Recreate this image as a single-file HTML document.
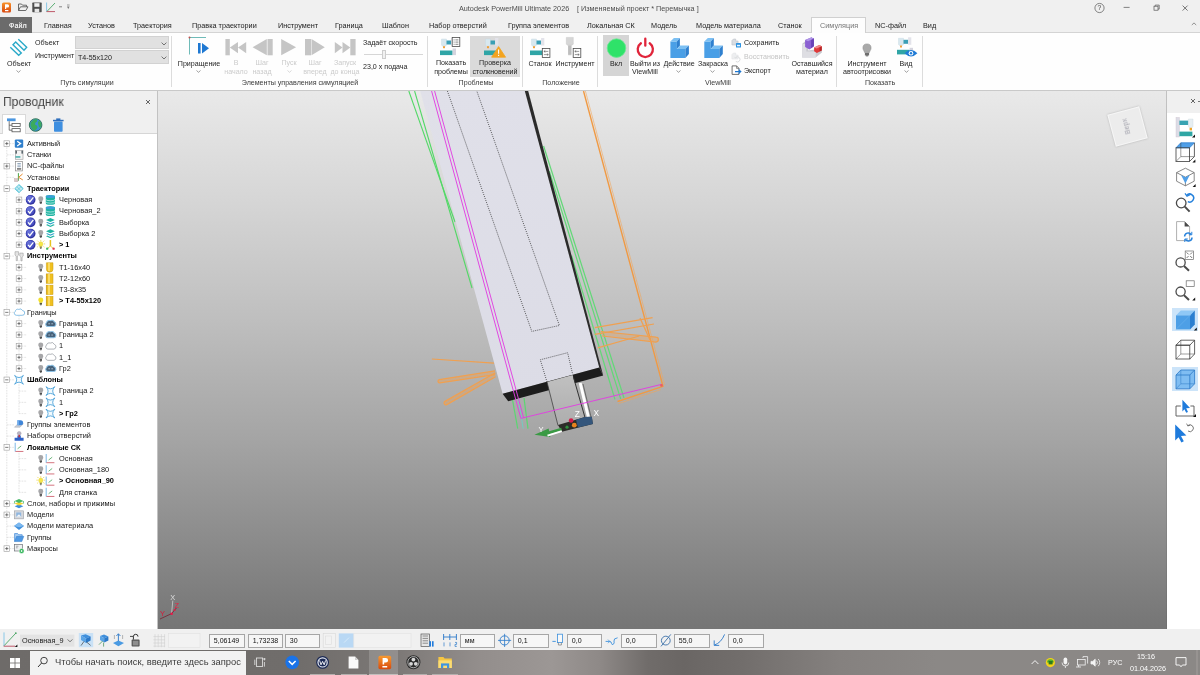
<!DOCTYPE html>
<html lang="ru">
<head>
<meta charset="utf-8">
<title>Autodesk PowerMill Ultimate 2026</title>
<style>
*{box-sizing:border-box;margin:0;padding:0}
html,body{width:1200px;height:675px;overflow:hidden;background:#f0f0f0}
body{font-family:"Liberation Sans",sans-serif;font-size:7.5px;color:#1e1e1e;position:relative}
.abs{position:absolute}
.t{position:absolute;white-space:nowrap;line-height:1;will-change:transform}
svg{position:absolute;overflow:visible;will-change:transform}
/* title */
#title{left:0;top:0;width:1200px;height:17px;background:#f0f0f0}
#tabs{left:0;top:17px;width:1200px;height:16px;background:#f0f0f0;border-bottom:1px solid #d4d4d4}
#tabs .t{top:5.2px;font-size:7.28px;color:#222}
#ribbon{left:0;top:33px;width:1200px;height:57px;background:#fefefe}
#ribbon .sep{position:absolute;top:3px;width:1px;height:51px;background:#dcdcdc}
#ribbon .gl{position:absolute;top:46px;font-size:7.3px;color:#333;white-space:nowrap;line-height:1;transform:translateX(-50%)}
#ribbon .bl{position:absolute;font-size:7.3px;color:#222;white-space:nowrap;line-height:8.2px;text-align:center;transform:translateX(-50%)}
#ribbon .dis{color:#b9b9b9}
#ribbon .t{margin-top:1.3px}
#ribline{left:0;top:90px;width:1200px;height:1px;background:#c9c9c9}
/* explorer */
#exphead{left:0;top:91px;width:157px;height:43px;background:#f0f0f0;border-bottom:1px solid #d6d6d6}
#tree{left:0;top:134px;width:157px;height:495px;background:#fff}
#expborder{left:157px;top:91px;width:1px;height:538px;background:#c2c2c2}
#tree .r{will-change:transform;position:absolute;left:0;height:11.25px;white-space:nowrap;font-size:7.4px;line-height:11.25px;color:#151515}
#tree .b{font-weight:bold;color:#000}
/* viewport */
#view{left:158px;top:91px;width:1009px;height:538px;background:linear-gradient(#e9e9e9 0%,#d6d6d6 20%,#bebebe 43%,#a4a4a4 65%,#757575 100%);overflow:hidden}
#rtool{left:1167px;top:91px;width:33px;height:538px;background:#fff}
#rthead{left:1167px;top:91px;width:33px;height:22px;background:#f0f0f0}
#status{left:0;top:629px;width:1200px;height:21px;background:#f0f0f0}
#status .box{will-change:transform;position:absolute;top:4.6px;height:14.2px;background:#f6f6f6;border:1px solid #a6a6a6;font-size:7.05px;line-height:12px;padding-left:3.8px;color:#111;white-space:nowrap}
#task{left:0;top:650px;width:1200px;height:25px;background:linear-gradient(90deg,#6e6b69 0%,#706d6b 25%,#7c7876 33%,#938e8c 40%,#9c9795 46%,#8e8987 50%,#706c6a 54%,#6a6664 57%,#726e6c 62%,#85817f 70%,#8b8886 78%,#8b8886 100%)}
</style>
</head>
<body>
<div id="title" class="abs">
<svg style="left:0;top:0" width="80" height="17" viewBox="0 0 80 17">
 <defs><linearGradient id="og" x1="0" y1="0" x2="0" y2="1"><stop offset="0" stop-color="#f7922a"/><stop offset="1" stop-color="#d8480e"/></linearGradient></defs>
 <rect x="2" y="2.5" width="9" height="10" rx="1.6" fill="url(#og)"/>
 <path d="M5 4.2h2.4a1.7 1.7 0 0 1 0 3.4H6.2V9H5z" fill="#fff"/><rect x="5" y="10" width="3.4" height="1.2" fill="#fff"/>
 <path d="M18.5 10.5V4h3l1 1.2h4v1.6M18.5 10.5l2-3.7h7.5l-2.2 3.7z" fill="none" stroke="#5a5a5a" stroke-width="0.9"/>
 <rect x="32.3" y="2.6" width="9.4" height="9.6" rx="0.6" fill="#4d4d4d"/><rect x="34.3" y="3.2" width="5.2" height="3.6" fill="#f0f0f0"/><rect x="34.6" y="8.8" width="4.6" height="3.4" fill="#e8e8e8"/>
 <path d="M46.6 2.5v9" stroke="#7ec3e6" stroke-width="0.9"/><path d="M47 11.4L55 3" stroke="#4aa564" stroke-width="0.9"/><path d="M46.6 11.6H55" stroke="#b9485a" stroke-width="0.9"/>
 <path d="M59 6.8h3" stroke="#777" stroke-width="0.9"/>
 <path d="M67 6.5h2.6l-1.3 2.6z" fill="#777"/><path d="M67 5h2.6" stroke="#777" stroke-width="0.7"/>
</svg>
<span class="t" style="left:458.6px;top:4.9px;font-size:7.24px;color:#4c4c4c">Autodesk PowerMill Ultimate 2026</span>
<span class="t" style="left:576.6px;top:4.9px;font-size:7.24px;color:#4c4c4c">[ Изменяемый проект * Перемычка ]</span>
<svg style="left:1090px;top:0" width="110" height="17" viewBox="0 0 110 17">
 <circle cx="9.5" cy="8" r="4.6" fill="none" stroke="#555" stroke-width="0.7"/>
 <text x="9.5" y="10.4" font-size="6.8" text-anchor="middle" fill="#444" font-family="Liberation Sans, sans-serif">?</text>
 <path d="M33.6 7.4h6" stroke="#666" stroke-width="0.8"/>
 <rect x="64" y="6.2" width="4" height="4" fill="none" stroke="#555" stroke-width="0.7"/><path d="M65.2 6.2v-1.1h4v4h-1.2" fill="none" stroke="#555" stroke-width="0.7"/>
 <path d="M92.6 5.6l5 5m0-5l-5 5" stroke="#555" stroke-width="0.8"/>
</svg>
</div>
<div id="tabs" class="abs">
<div class="abs" style="left:0;top:0;width:32px;height:16px;background:#6b6b6b"></div>
<span class="t" style="left:8.6px;color:#ececec;font-size:7.2px;top:5.3px;text-shadow:0 0 0.3px #ececec">Файл</span>
<div class="abs" style="left:810.5px;top:0;width:55px;height:17px;background:#fdfdfd;border:1px solid #d0d0d0;border-bottom:none"></div>
<span class="t" style="left:44px">Главная</span>
<span class="t" style="left:88px">Установ</span>
<span class="t" style="left:133px">Траектория</span>
<span class="t" style="left:192px">Правка траектории</span>
<span class="t" style="left:278px">Инструмент</span>
<span class="t" style="left:335px">Граница</span>
<span class="t" style="left:382px">Шаблон</span>
<span class="t" style="left:429px">Набор отверстий</span>
<span class="t" style="left:507.6px">Группа элементов</span>
<span class="t" style="left:586.6px">Локальная СК</span>
<span class="t" style="left:651.2px">Модель</span>
<span class="t" style="left:696px">Модель материала</span>
<span class="t" style="left:778px">Станок</span>
<span class="t" style="left:820px;color:#777">Симуляция</span>
<span class="t" style="left:875px">NC-файл</span>
<span class="t" style="left:923px">Вид</span>
<svg style="left:1191px;top:5px" width="6" height="4" viewBox="0 0 6 4"><path d="M0.8 3L3 0.9L5.2 3" fill="none" stroke="#777" stroke-width="0.8"/></svg>
</div>
<div id="ribbon" class="abs">
<div class="sep" style="left:171.0px"></div>
<div class="sep" style="left:427.0px"></div>
<div class="sep" style="left:522.0px"></div>
<div class="sep" style="left:597.0px"></div>
<div class="sep" style="left:836.0px"></div>
<div class="sep" style="left:921.5px"></div>
<span class="t " style="left:86.5px;top:45.88px;font-size:7.1px;color:#3a3a3a;transform:translateX(-50%);">Путь симуляции</span>
<span class="t " style="left:299.5px;top:45.88px;font-size:7.1px;color:#3a3a3a;transform:translateX(-50%);">Элементы управления симуляцией</span>
<span class="t " style="left:475.5px;top:45.88px;font-size:7.1px;color:#3a3a3a;transform:translateX(-50%);">Проблемы</span>
<span class="t " style="left:560.5px;top:45.88px;font-size:7.1px;color:#3a3a3a;transform:translateX(-50%);">Положение</span>
<span class="t " style="left:717.5px;top:45.88px;font-size:7.1px;color:#3a3a3a;transform:translateX(-50%);">ViewMill</span>
<span class="t " style="left:879.5px;top:45.88px;font-size:7.1px;color:#3a3a3a;transform:translateX(-50%);">Показать</span>
<svg style="left:8px;top:3px" width="22" height="22" viewBox="0 0 22 22">
<path d="M2.3 11.3L10.7 19.3L13.3 17L5 8.7L7.7 6L16 14.3L18.7 11.3L10.3 3.3" fill="none" stroke="#2aa9c8" stroke-width="1.4" stroke-linejoin="miter"/>
</svg>
<span class="t " style="left:18.8px;top:26.78px;font-size:7.1px;transform:translateX(-50%);">Объект</span>
<svg style="left:16px;top:37px" width="5" height="3" viewBox="0 0 5 3"><path d="M0.5 0.5L2.5 2.3L4.5 0.5" fill="none" stroke="#777" stroke-width="0.7"/></svg>
<span class="t " style="left:35px;top:5.97px;font-size:7.1px;">Объект</span>
<span class="t " style="left:35px;top:18.78px;font-size:7.1px;">Инструмент</span>
<div class="abs" style="left:75.3px;top:2.6px;width:93.7px;height:13.2px;background:#e1e1e1;border:1px solid #d2d2d2"></div>
<div class="abs" style="left:75.3px;top:17.2px;width:93.7px;height:13.4px;background:#e1e1e1;border:1px solid #d2d2d2"></div>
<span class="t " style="left:77.6px;top:20.38px;font-size:7.1px;color:#222;">T4-55x120</span>
<svg style="left:160.5px;top:8.5px" width="6" height="4" viewBox="0 0 6 4"><path d="M0.6 0.6L3 3L5.4 0.6" fill="none" stroke="#555" stroke-width="0.8"/></svg>
<svg style="left:160.5px;top:22.5px" width="6" height="4" viewBox="0 0 6 4"><path d="M0.6 0.6L3 3L5.4 0.6" fill="none" stroke="#555" stroke-width="0.8"/></svg>
<svg style="left:186px;top:2.3px" width="24" height="22" viewBox="0 0 24 22">
<path d="M3.5 19.5V2.5H20" fill="none" stroke="#4aa9a6" stroke-width="0.8"/>
<circle cx="3.5" cy="2.5" r="1" fill="#c0504d"/>
<rect x="12" y="8" width="2.6" height="10.5" fill="#1e78d2"/>
<path d="M16 8L23 13.2L16 18.5z" fill="#1e78d2"/>
</svg>
<span class="t " style="left:198.5px;top:26.68px;font-size:7.1px;transform:translateX(-50%);">Приращение</span>
<svg style="left:196.0px;top:36.8px" width="5" height="3" viewBox="0 0 5 3"><path d="M0.5 0.5L2.5 2.3L4.5 0.5" fill="none" stroke="#777" stroke-width="0.7"/></svg>
<svg style="left:224px;top:5px" width="136" height="19" viewBox="0 0 136 19">
<g fill="#c5c5c5">
<rect x="1.4" y="1" width="4.4" height="16.3"/><path d="M14 4L5.8 9.6L14 15.2z"/><path d="M22.2 4L14 9.6L22.2 15.2z"/>
<path d="M42.8 1L28.6 9.15L42.8 17.3z"/><rect x="43.5" y="1" width="5.2" height="16.3"/>
<path d="M57.2 1L72.1 9.15L57.2 17.3z"/>
<rect x="81" y="1" width="6" height="16.3"/><path d="M87.5 1L100.8 9.15L87.5 17.3z"/>
<path d="M110.8 4L118.5 9.6L110.8 15.2z"/><path d="M118.5 4L126.3 9.6L118.5 15.2z"/><rect x="126.3" y="1" width="5.3" height="16.3"/>
</g></svg>
<span class="t " style="left:236px;top:25.88px;font-size:7.1px;color:#cbcbcb;transform:translateX(-50%);">В</span>
<span class="t " style="left:236px;top:34.38px;font-size:7.1px;color:#cbcbcb;transform:translateX(-50%);">начало</span>
<span class="t " style="left:262px;top:25.88px;font-size:7.1px;color:#cbcbcb;transform:translateX(-50%);">Шаг</span>
<span class="t " style="left:262px;top:34.38px;font-size:7.1px;color:#cbcbcb;transform:translateX(-50%);">назад</span>
<span class="t " style="left:289px;top:25.88px;font-size:7.1px;color:#cbcbcb;transform:translateX(-50%);">Пуск</span>
<svg style="left:286.5px;top:36.8px" width="5" height="3" viewBox="0 0 5 3"><path d="M0.5 0.5L2.5 2.3L4.5 0.5" fill="none" stroke="#c8c8c8" stroke-width="0.7"/></svg>
<span class="t " style="left:315px;top:25.88px;font-size:7.1px;color:#cbcbcb;transform:translateX(-50%);">Шаг</span>
<span class="t " style="left:315px;top:34.38px;font-size:7.1px;color:#cbcbcb;transform:translateX(-50%);">вперед</span>
<span class="t " style="left:344.5px;top:25.88px;font-size:7.1px;color:#cbcbcb;transform:translateX(-50%);">Запуск</span>
<span class="t " style="left:344.5px;top:34.38px;font-size:7.1px;color:#cbcbcb;transform:translateX(-50%);">до конца</span>
<span class="t " style="left:363px;top:5.78px;font-size:7.1px;">Задаёт скорость</span>
<div class="abs" style="left:364px;top:21.2px;width:59px;height:1px;background:#d6d6d6"></div>
<div class="abs" style="left:382.2px;top:16.8px;width:4px;height:9.4px;background:#f1f1f1;border:0.8px solid #cdcdcd"></div>
<span class="t " style="left:363px;top:30.18px;font-size:7.1px;">23,0 x подача</span>
<div class="abs" style="left:469.6px;top:3px;width:50px;height:40.6px;background:#dadada"></div>
<svg style="left:0;top:0" width="600" height="57" viewBox="0 33 600 57">
<g transform="translate(440,37.5)">
<path d="M1.5 1.5h5v6l-1 1.2h-3l-1-1.2z" fill="#d9e8ef" stroke="#c3d6e0" stroke-width="0.4"/>
<rect x="3" y="8.7" width="2" height="2" fill="#f0a13a"/>
<rect x="6.5" y="3" width="4.6" height="4" fill="#3b9fb5"/>
<rect x="11.1" y="0.5" width="3.2" height="7.5" fill="#e3e3ea"/>
<rect x="0" y="13" width="12.6" height="4.6" fill="#2fa5a6"/>
<rect x="12.6" y="11" width="3.4" height="6.6" fill="#d4d4de"/>
</g><g transform="translate(452.2,37.6)"><rect x="0" y="0" width="7.6" height="9" fill="#fff" stroke="#4a4a4a" stroke-width="0.8"/><path d="M1.4 2.3h1M3.2 2.3h3M1.4 4.5h1M3.2 4.5h3M1.4 6.7h1M3.2 6.7h3" stroke="#555" stroke-width="0.7"/></g><g transform="translate(484,37.5)">
<path d="M1.5 1.5h5v6l-1 1.2h-3l-1-1.2z" fill="#d9e8ef" stroke="#c3d6e0" stroke-width="0.4"/>
<rect x="3" y="8.7" width="2" height="2" fill="#f0a13a"/>
<rect x="6.5" y="3" width="4.6" height="4" fill="#3b9fb5"/>
<rect x="11.1" y="0.5" width="3.2" height="7.5" fill="#e3e3ea"/>
<rect x="0" y="13" width="12.6" height="4.6" fill="#2fa5a6"/>
<rect x="12.6" y="11" width="3.4" height="6.6" fill="#d4d4de"/>
</g><path d="M498.6 46.6L505.6 57.2H491.6z" fill="#f3a41f" stroke="#f3a41f" stroke-width="0.8" stroke-linejoin="round"/><path d="M498.6 49.5v4.2M498.6 54.8v1.2" stroke="#fff" stroke-width="1.1"/><g transform="translate(530,37.5)">
<path d="M1.5 1.5h5v6l-1 1.2h-3l-1-1.2z" fill="#d9e8ef" stroke="#c3d6e0" stroke-width="0.4"/>
<rect x="3" y="8.7" width="2" height="2" fill="#f0a13a"/>
<rect x="6.5" y="3" width="4.6" height="4" fill="#3b9fb5"/>
<rect x="11.1" y="0.5" width="3.2" height="7.5" fill="#e3e3ea"/>
<rect x="0" y="13" width="12.6" height="4.6" fill="#2fa5a6"/>
<rect x="12.6" y="11" width="3.4" height="6.6" fill="#d4d4de"/>
</g><g transform="translate(542.3,48.4)"><rect x="0" y="0" width="7.6" height="9" fill="#fff" stroke="#4a4a4a" stroke-width="0.8"/><path d="M1.6 3h4.4M1.6 6.2h4.4" stroke="#555" stroke-width="0.6"/><path d="M3 2l-1.4 1 1.4 1M4.6 5.2l1.4 1-1.4 1" fill="none" stroke="#555" stroke-width="0.6"/></g><g transform="translate(565.5,37)">
<path d="M0.8 0.4h7v6.8l-1.4 1h-4.2l-1.4-1z" fill="#d6d6d6" stroke="#bdbdbd" stroke-width="0.4"/>
<rect x="2.6" y="8.2" width="3.4" height="10" fill="#c4c4c4"/><path d="M2.6 10h3.4M2.6 12h3.4M2.6 14h3.4M2.6 16h3.4" stroke="#aaa" stroke-width="0.5"/>
</g><g transform="translate(573.2,48.4)"><rect x="0" y="0" width="7.6" height="9" fill="#fff" stroke="#4a4a4a" stroke-width="0.8"/><path d="M1.6 3h4.4M1.6 6.2h4.4" stroke="#555" stroke-width="0.6"/><path d="M3 2l-1.4 1 1.4 1M4.6 5.2l1.4 1-1.4 1" fill="none" stroke="#555" stroke-width="0.6"/></g></svg>
<span class="t " style="left:450.5px;top:25.88px;font-size:7.1px;transform:translateX(-50%);">Показать</span>
<span class="t " style="left:450.5px;top:34.38px;font-size:7.1px;transform:translateX(-50%);">проблемы</span>
<span class="t " style="left:494.5px;top:25.88px;font-size:7.1px;transform:translateX(-50%);">Проверка</span>
<span class="t " style="left:494.5px;top:34.38px;font-size:7.1px;transform:translateX(-50%);">столкновений</span>
<span class="t " style="left:540px;top:26.38px;font-size:7.1px;transform:translateX(-50%);">Станок</span>
<span class="t " style="left:574.5px;top:26.38px;font-size:7.1px;transform:translateX(-50%);">Инструмент</span>
<div class="abs" style="left:602.8px;top:2.4px;width:26.2px;height:41px;background:#d5d5d5"></div>
<svg style="left:600px;top:0" width="330" height="57" viewBox="600 33 330 57">
<circle cx="616.5" cy="48.1" r="9.3" fill="#2fe269" stroke="#6fe795" stroke-width="0.8"/><path d="M640.9 43.3A7.6 7.6 0 1 0 649.7 43.3" fill="none" stroke="#e0243a" stroke-width="2.3" stroke-linecap="round"/><path d="M645.3 38.7v7" stroke="#e0243a" stroke-width="2.3" stroke-linecap="round"/><g transform="translate(668.4,37.6)">
<path d="M2 4L8.5 4L8.5 11.5L17 11.5L17 20.5L2 20.5Z" fill="#4a9fe6"/>
<path d="M2 4L5.5 0.5L11.5 0.5L8.5 4Z" fill="#7cc0f3"/>
<path d="M8.5 4L11.5 0.5L11.5 8L8.5 11.5Z" fill="#2f80cf"/>
<path d="M8.5 11.5L11.5 8L20.5 8L17 11.5Z" fill="#7cc0f3"/>
<path d="M17 11.5L20.5 8L20.5 16.5L17 20.5Z" fill="#2f80cf"/>
</g><g transform="translate(702.3,37.6)">
<path d="M2 4L8.5 4L8.5 11.5L17 11.5L17 20.5L2 20.5Z" fill="#4a9fe6"/>
<path d="M2 4L5.5 0.5L11.5 0.5L8.5 4Z" fill="#7cc0f3"/>
<path d="M8.5 4L11.5 0.5L11.5 8L8.5 11.5Z" fill="#2f80cf"/>
<path d="M8.5 11.5L11.5 8L20.5 8L17 11.5Z" fill="#7cc0f3"/>
<path d="M17 11.5L20.5 8L20.5 16.5L17 20.5Z" fill="#2f80cf"/>
</g><g transform="translate(731.3,37.6)">
<path d="M0.6 3L2.2 1.4H4.4V3.4H6.8V7.4H0.6Z" fill="#d9dde2" stroke="#b4bac2" stroke-width="0.5"/>
<rect x="4.7" y="5.3" width="5" height="4.6" rx="0.5" fill="#2f94e2"/><rect x="5.7" y="7.2" width="3" height="1.5" fill="#eaf4fc"/>
</g><g transform="translate(731.3,51.6)" opacity="0.55">
<path d="M0.6 3L2.2 1.4H4.4V3.4H6.8V7.4H0.6Z" fill="#dfe1e4" stroke="#c6c9ce" stroke-width="0.5"/>
<path d="M4.5 9.8A2.6 2.6 0 1 0 4.2 6" fill="none" stroke="#b9bcc0" stroke-width="0.9"/><path d="M3 5.2l1.2 1.3 1.3-1" fill="none" stroke="#b9bcc0" stroke-width="0.8"/>
</g><g transform="translate(731.6,65.4)">
<path d="M0.5 0.5H5L7.4 3V9H0.5Z" fill="#fff" stroke="#4d4d4d" stroke-width="0.8"/><path d="M5 0.5V3H7.4" fill="none" stroke="#4d4d4d" stroke-width="0.6"/>
<path d="M3.4 6.2H8.8M7 4.2L9.2 6.2L7 8.2" fill="none" stroke="#1f78d1" stroke-width="1.1"/>
</g><g transform="translate(801.3,37)">
<path d="M0.8 7L3.6 4.6H7V13.4L13.6 12.6L20.6 9.4V15.6L14.4 20.4H0.8Z" fill="#c9c9cf"/>
<path d="M0.8 7H5V14.6H14.4V20.4H0.8Z" fill="#dedee3"/>
<path d="M3.8 3L9.8 0.4L12.6 1.6V9.2L8.2 12.4L3.8 10Z" fill="#8b60d2"/>
<path d="M9.8 0.4L12.6 1.6V9.2L9.8 11.2Z" fill="#6a42b6"/>
<path d="M3.8 3L9.8 0.4L12.6 1.6L6.8 4.2Z" fill="#b196e8"/>
<path d="M12.8 10.4L18 8L20.4 9.2V13.4L15.6 16L12.8 14.2Z" fill="#e03a3a"/>
<path d="M12.8 10.4L18 8L20.4 9.2L15.4 11.6Z" fill="#f28a8a"/>
<path d="M18.2 10.4L20.4 9.2V13.4L18.2 14.6Z" fill="#b82626"/>
</g><g transform="translate(862.6,43.6)">
<path d="M4.4 0.3a4.1 4.1 0 0 1 4.1 4.1c0 1.8-1.3 2.7-1.6 4.4H1.9C1.6 7.1 0.3 6.2 0.3 4.4A4.1 4.1 0 0 1 4.4 0.3z" fill="#a9a9a9" stroke="#8d8d8d" stroke-width="0.5"/>
<rect x="2.3" y="9.2" width="4.2" height="2.6" fill="#6e6e6e"/><rect x="3.2" y="11.8" width="2.4" height="0.9" fill="#555"/>
</g><g transform="translate(897,36.8)">
<path d="M1.5 1.5h5v6l-1 1.2h-3l-1-1.2z" fill="#d9e8ef" stroke="#c3d6e0" stroke-width="0.4"/>
<rect x="3" y="8.7" width="2" height="2" fill="#f0a13a"/>
<rect x="6.5" y="3" width="4.6" height="4" fill="#3b9fb5"/>
<rect x="11.1" y="0.5" width="3.2" height="7.5" fill="#e3e3ea"/>
<rect x="0" y="13" width="12.6" height="4.6" fill="#2fa5a6"/>
<rect x="12.6" y="11" width="3.4" height="6.6" fill="#d4d4de"/>
</g><path d="M904.6 53.2Q911 46.6 917.4 53.2Q911 59.6 904.6 53.2Z" fill="#1f7bd6"/><circle cx="911" cy="53.2" r="2.3" fill="#fff"/><circle cx="911" cy="53.2" r="1.2" fill="#1f7bd6"/></svg>
<span class="t " style="left:616.3px;top:26.38px;font-size:7.1px;transform:translateX(-50%);">Вкл</span>
<span class="t " style="left:645.3px;top:26.38px;font-size:7.1px;transform:translateX(-50%);">Выйти из</span>
<span class="t " style="left:645.3px;top:34.58px;font-size:7.1px;transform:translateX(-50%);">ViewMill</span>
<span class="t " style="left:678.7px;top:26.38px;font-size:7.1px;transform:translateX(-50%);">Действие</span>
<svg style="left:676.2px;top:37.099999999999994px" width="5" height="3" viewBox="0 0 5 3"><path d="M0.5 0.5L2.5 2.3L4.5 0.5" fill="none" stroke="#777" stroke-width="0.7"/></svg>
<span class="t " style="left:712.6px;top:26.38px;font-size:7.1px;transform:translateX(-50%);">Закраска</span>
<svg style="left:710.1px;top:37.099999999999994px" width="5" height="3" viewBox="0 0 5 3"><path d="M0.5 0.5L2.5 2.3L4.5 0.5" fill="none" stroke="#777" stroke-width="0.7"/></svg>
<span class="t " style="left:743.8px;top:5.97px;font-size:7.1px;">Сохранить</span>
<span class="t " style="left:743.8px;top:19.97px;font-size:7.1px;color:#c4c4c4;">Восстановить</span>
<span class="t " style="left:743.8px;top:33.27px;font-size:7.1px;">Экспорт</span>
<span class="t " style="left:812.3px;top:26.38px;font-size:7.1px;transform:translateX(-50%);">Оставшийся</span>
<span class="t " style="left:812.3px;top:34.58px;font-size:7.1px;transform:translateX(-50%);">материал</span>
<span class="t " style="left:867px;top:26.38px;font-size:7.1px;transform:translateX(-50%);">Инструмент</span>
<span class="t " style="left:867px;top:34.58px;font-size:7.1px;transform:translateX(-50%);">автоотрисовки</span>
<span class="t " style="left:906.4px;top:26.38px;font-size:7.1px;transform:translateX(-50%);">Вид</span>
<svg style="left:903.9px;top:37.099999999999994px" width="5" height="3" viewBox="0 0 5 3"><path d="M0.5 0.5L2.5 2.3L4.5 0.5" fill="none" stroke="#777" stroke-width="0.7"/></svg>
</div>
<div id="ribline" class="abs"></div>
<div id="exphead" class="abs">
<span class="t" style="left:2.8px;top:3.7px;font-size:13px;color:#444;transform:scaleX(0.93);transform-origin:0 0">Проводник</span>
<svg style="left:144.6px;top:7.5px" width="6" height="6" viewBox="0 0 6 6"><path d="M1 1L5 5M5 1L1 5" stroke="#555" stroke-width="0.9"/></svg>
<div class="abs" style="left:1.6px;top:22.6px;width:24.6px;height:20.4px;background:#fff;border:1px solid #d9d9d9;border-bottom:none"></div>
<svg style="left:0;top:22px" width="70" height="22" viewBox="0 113 70 22">
<rect x="7" y="118.4" width="8.6" height="2.8" fill="#4a96e0"/>
<path d="M9.2 121.2V130.2H12M9.2 125.2H12" fill="none" stroke="#555" stroke-width="0.8"/>
<rect x="12" y="123.4" width="8.2" height="3.2" fill="#fff" stroke="#555" stroke-width="0.8"/>
<rect x="12" y="128.6" width="8.2" height="3.2" fill="#fff" stroke="#555" stroke-width="0.8"/>
<circle cx="35.6" cy="125" r="6.3" fill="#3a8fd6" stroke="#2c6f4a" stroke-width="0.9"/>
<path d="M31 122.2q2-3 5.4-3.2q1.6 1.4 0.4 2.8q-2 0.6-1.8 2.6q2.4 0.4 2.6 2.8q-1.2 2.6-3 3.6q-3.4-1.6-4.2-5q-0.2-2 0.6-3.6z" fill="#3bab5e"/>
<path d="M38.6 121q1.8 0 2.6 2.2q0.4 2.6-1 4.6q-1.6-0.8-1.8-2.8q-1.2-2.2 0.2-4z" fill="#3bab5e"/>
<rect x="54" y="121.6" width="8.6" height="10.2" rx="0.8" fill="#3f8fe0"/>
<rect x="53" y="119.8" width="10.6" height="1.5" fill="#2f6fbd"/><rect x="56.2" y="118.4" width="4.2" height="1.6" fill="#2f6fbd"/>
</svg>
</div>
<div id="tree" class="abs">
<svg style="left:0;top:0" width="157" height="495" viewBox="0 134 157 495">
<path d="M6.8 143.6V548.6" stroke="#c4c4c4" stroke-width="0.7" stroke-dasharray="0.7 0.9"/>
<path d="M19 192.6V244.85" stroke="#c4c4c4" stroke-width="0.7" stroke-dasharray="0.7 0.9"/>
<path d="M19 260.1V301.1" stroke="#c4c4c4" stroke-width="0.7" stroke-dasharray="0.7 0.9"/>
<path d="M19 316.35V368.6" stroke="#c4c4c4" stroke-width="0.7" stroke-dasharray="0.7 0.9"/>
<path d="M19 383.85V413.6" stroke="#c4c4c4" stroke-width="0.7" stroke-dasharray="0.7 0.9"/>
<path d="M19 451.35V492.35" stroke="#c4c4c4" stroke-width="0.7" stroke-dasharray="0.7 0.9"/>
<path d="M7 143.6H14" stroke="#c4c4c4" stroke-width="0.7" stroke-dasharray="0.7 0.9"/><rect x="4.00" y="140.80" width="5.6" height="5.6" fill="#fff" stroke="#9c9c9c" stroke-width="0.6"/><path d="M5.20 143.60h3.2" stroke="#444" stroke-width="0.7"/><path d="M6.80 142.00v3.2" stroke="#444" stroke-width="0.7"/><g transform="translate(19.00,143.60) scale(1)"><rect x="-4.2" y="-4.2" width="8.4" height="8.4" rx="1.2" fill="#2f7fcc"/><path d="M-1.8 -2.4L1.6 0L-1.8 2.4" fill="none" stroke="#fff" stroke-width="1.3"/></g>
<path d="M7 154.85H14" stroke="#c4c4c4" stroke-width="0.7" stroke-dasharray="0.7 0.9"/><g transform="translate(19.00,154.85) scale(1)"><rect x="-3.6" y="-4.2" width="7.6" height="8.6" fill="#f4f4f4" stroke="#9a9a9a" stroke-width="0.6"/><rect x="-3.6" y="-4.2" width="1.6" height="3" fill="#5e6a70"/><rect x="2.4" y="-4.2" width="1.6" height="3" fill="#5e6a70"/><rect x="-3.6" y="1.4" width="5" height="1.4" fill="#39a7a5"/></g>
<path d="M7 166.1H14" stroke="#c4c4c4" stroke-width="0.7" stroke-dasharray="0.7 0.9"/><rect x="4.00" y="163.30" width="5.6" height="5.6" fill="#fff" stroke="#9c9c9c" stroke-width="0.6"/><path d="M5.20 166.10h3.2" stroke="#444" stroke-width="0.7"/><path d="M6.80 164.50v3.2" stroke="#444" stroke-width="0.7"/><g transform="translate(19.00,166.10) scale(1)"><rect x="-3.4" y="-4.6" width="7" height="9.4" fill="#fff" stroke="#8a8a8a" stroke-width="0.7"/><path d="M-1.6 -2.6h3.4M-1.6 -1h3.4M-1.6 0.6h3.4" stroke="#6a87a5" stroke-width="0.7"/><rect x="-2" y="2" width="4.2" height="1.6" fill="#777"/></g>
<path d="M7 177.35H14" stroke="#c4c4c4" stroke-width="0.7" stroke-dasharray="0.7 0.9"/><g transform="translate(19.00,177.35) scale(1)"><path d="M-0.6 -4.2V3.4" stroke="#4aa64a" stroke-width="1"/><path d="M-0.4 0L3.6 -3.4M-0.4 0L3.8 2.6" stroke="#e58a2d" stroke-width="1"/><rect x="-4.6" y="1.2" width="3.6" height="3.2" fill="#d9c9c9" stroke="#b9a9a9" stroke-width="0.4"/></g>
<path d="M7 188.6H14" stroke="#c4c4c4" stroke-width="0.7" stroke-dasharray="0.7 0.9"/><rect x="4.00" y="185.80" width="5.6" height="5.6" fill="#fff" stroke="#9c9c9c" stroke-width="0.6"/><path d="M5.20 188.60h3.2" stroke="#444" stroke-width="0.7"/><g transform="translate(19.00,188.60) scale(0.88)"><path d="M0 -4.6L4.8 0L0 4.6L-4.8 0Z" fill="#bfeaf2" stroke="#3bb8d0" stroke-width="0.8"/><path d="M-2.4 -2.2L2.2 2.4M0 -4.4L4.4 0M-4.4 0L0 4.4M-2.2 2.2L2.2 -2.2" stroke="#3bb8d0" stroke-width="0.6"/></g>
<path d="M19 199.85H25" stroke="#c4c4c4" stroke-width="0.7" stroke-dasharray="0.7 0.9"/><rect x="16.20" y="197.05" width="5.6" height="5.6" fill="#fff" stroke="#9c9c9c" stroke-width="0.6"/><path d="M17.40 199.85h3.2" stroke="#444" stroke-width="0.7"/><path d="M19.00 198.25v3.2" stroke="#444" stroke-width="0.7"/><g transform="translate(30.60,199.85) scale(0.98)"><circle r="5" fill="#31339f"/><circle r="4.2" cx="-0.4" cy="-0.5" fill="#4a52c4"/><circle r="2.6" cx="-1.2" cy="-1.6" fill="#6d79dc" opacity="0.7"/><path d="M-2.6 0L-0.8 2.2L2.8 -2.6" fill="none" stroke="#fff" stroke-width="1.3"/></g><g transform="translate(40.80,200.05) scale(0.86)"><path d="M0 -4.4a2.9 2.9 0 0 1 2.9 2.9c0 1.3-1 1.9-1.2 3.1H-1.7C-1.9 0.4-2.9 -0.2-2.9 -1.5A2.9 2.9 0 0 1 0 -4.4z" fill="#a6a6a8"/><rect x="-1.4" y="1.8" width="2.8" height="2" fill="#4e4e4e"/><rect x="-0.8" y="3.8" width="1.6" height="0.8" fill="#3a3a3a"/></g><g transform="translate(50.40,199.85) scale(1)"><path d="M-4.6 -3.4a4.6 1.5 0 0 1 9.2 0V3.4a4.6 1.5 0 0 1-9.2 0Z" fill="#1fb4a2"/><ellipse cx="0" cy="-3.4" rx="4.6" ry="1.5" fill="#3aa0d8"/><path d="M-4.6 -0.6a4.6 1.5 0 0 0 9.2 0M-4.6 1.8a4.6 1.5 0 0 0 9.2 0" fill="none" stroke="#d8f4f0" stroke-width="0.7"/></g>
<path d="M19 211.1H25" stroke="#c4c4c4" stroke-width="0.7" stroke-dasharray="0.7 0.9"/><rect x="16.20" y="208.30" width="5.6" height="5.6" fill="#fff" stroke="#9c9c9c" stroke-width="0.6"/><path d="M17.40 211.10h3.2" stroke="#444" stroke-width="0.7"/><path d="M19.00 209.50v3.2" stroke="#444" stroke-width="0.7"/><g transform="translate(30.60,211.10) scale(0.98)"><circle r="5" fill="#31339f"/><circle r="4.2" cx="-0.4" cy="-0.5" fill="#4a52c4"/><circle r="2.6" cx="-1.2" cy="-1.6" fill="#6d79dc" opacity="0.7"/><path d="M-2.6 0L-0.8 2.2L2.8 -2.6" fill="none" stroke="#fff" stroke-width="1.3"/></g><g transform="translate(40.80,211.30) scale(0.86)"><path d="M0 -4.4a2.9 2.9 0 0 1 2.9 2.9c0 1.3-1 1.9-1.2 3.1H-1.7C-1.9 0.4-2.9 -0.2-2.9 -1.5A2.9 2.9 0 0 1 0 -4.4z" fill="#a6a6a8"/><rect x="-1.4" y="1.8" width="2.8" height="2" fill="#4e4e4e"/><rect x="-0.8" y="3.8" width="1.6" height="0.8" fill="#3a3a3a"/></g><g transform="translate(50.40,211.10) scale(1)"><path d="M-4.6 -3.4a4.6 1.5 0 0 1 9.2 0V3.4a4.6 1.5 0 0 1-9.2 0Z" fill="#1fb4a2"/><ellipse cx="0" cy="-3.4" rx="4.6" ry="1.5" fill="#3aa0d8"/><path d="M-4.6 -0.6a4.6 1.5 0 0 0 9.2 0M-4.6 1.8a4.6 1.5 0 0 0 9.2 0" fill="none" stroke="#d8f4f0" stroke-width="0.7"/></g>
<path d="M19 222.35H25" stroke="#c4c4c4" stroke-width="0.7" stroke-dasharray="0.7 0.9"/><rect x="16.20" y="219.55" width="5.6" height="5.6" fill="#fff" stroke="#9c9c9c" stroke-width="0.6"/><path d="M17.40 222.35h3.2" stroke="#444" stroke-width="0.7"/><path d="M19.00 220.75v3.2" stroke="#444" stroke-width="0.7"/><g transform="translate(30.60,222.35) scale(0.98)"><circle r="5" fill="#31339f"/><circle r="4.2" cx="-0.4" cy="-0.5" fill="#4a52c4"/><circle r="2.6" cx="-1.2" cy="-1.6" fill="#6d79dc" opacity="0.7"/><path d="M-2.6 0L-0.8 2.2L2.8 -2.6" fill="none" stroke="#fff" stroke-width="1.3"/></g><g transform="translate(40.80,222.55) scale(0.86)"><path d="M0 -4.4a2.9 2.9 0 0 1 2.9 2.9c0 1.3-1 1.9-1.2 3.1H-1.7C-1.9 0.4-2.9 -0.2-2.9 -1.5A2.9 2.9 0 0 1 0 -4.4z" fill="#a6a6a8"/><rect x="-1.4" y="1.8" width="2.8" height="2" fill="#4e4e4e"/><rect x="-0.8" y="3.8" width="1.6" height="0.8" fill="#3a3a3a"/></g><g transform="translate(50.40,222.35) scale(1)"><path d="M-4.4 -2.4L0 -4.4L4.4 -2.4L0 -0.4Z" fill="#1fb4a2"/><path d="M-4.4 0.2L0 2.2L4.4 0.2L3 -0.4L0 1L-3 -0.4Z" fill="#2a9fc8"/><path d="M-4.4 2.6L0 4.6L4.4 2.6L3 2L0 3.4L-3 2Z" fill="#1fb4a2"/></g>
<path d="M19 233.6H25" stroke="#c4c4c4" stroke-width="0.7" stroke-dasharray="0.7 0.9"/><rect x="16.20" y="230.80" width="5.6" height="5.6" fill="#fff" stroke="#9c9c9c" stroke-width="0.6"/><path d="M17.40 233.60h3.2" stroke="#444" stroke-width="0.7"/><path d="M19.00 232.00v3.2" stroke="#444" stroke-width="0.7"/><g transform="translate(30.60,233.60) scale(0.98)"><circle r="5" fill="#31339f"/><circle r="4.2" cx="-0.4" cy="-0.5" fill="#4a52c4"/><circle r="2.6" cx="-1.2" cy="-1.6" fill="#6d79dc" opacity="0.7"/><path d="M-2.6 0L-0.8 2.2L2.8 -2.6" fill="none" stroke="#fff" stroke-width="1.3"/></g><g transform="translate(40.80,233.80) scale(0.86)"><path d="M0 -4.4a2.9 2.9 0 0 1 2.9 2.9c0 1.3-1 1.9-1.2 3.1H-1.7C-1.9 0.4-2.9 -0.2-2.9 -1.5A2.9 2.9 0 0 1 0 -4.4z" fill="#a6a6a8"/><rect x="-1.4" y="1.8" width="2.8" height="2" fill="#4e4e4e"/><rect x="-0.8" y="3.8" width="1.6" height="0.8" fill="#3a3a3a"/></g><g transform="translate(50.40,233.60) scale(1)"><path d="M-4.4 -2.4L0 -4.4L4.4 -2.4L0 -0.4Z" fill="#1fb4a2"/><path d="M-4.4 0.2L0 2.2L4.4 0.2L3 -0.4L0 1L-3 -0.4Z" fill="#2a9fc8"/><path d="M-4.4 2.6L0 4.6L4.4 2.6L3 2L0 3.4L-3 2Z" fill="#1fb4a2"/></g>
<path d="M19 244.85H25" stroke="#c4c4c4" stroke-width="0.7" stroke-dasharray="0.7 0.9"/><rect x="16.20" y="242.05" width="5.6" height="5.6" fill="#fff" stroke="#9c9c9c" stroke-width="0.6"/><path d="M17.40 244.85h3.2" stroke="#444" stroke-width="0.7"/><path d="M19.00 243.25v3.2" stroke="#444" stroke-width="0.7"/><g transform="translate(30.60,244.85) scale(0.98)"><circle r="5" fill="#31339f"/><circle r="4.2" cx="-0.4" cy="-0.5" fill="#4a52c4"/><circle r="2.6" cx="-1.2" cy="-1.6" fill="#6d79dc" opacity="0.7"/><path d="M-2.6 0L-0.8 2.2L2.8 -2.6" fill="none" stroke="#fff" stroke-width="1.3"/></g><g transform="translate(40.80,245.05) scale(0.95)"><path d="M0 -5.4V-3.8M-4.6 -1.2H-3.2M4.6 -1.2H3.2M-3.6 -4.6L-2.5 -3.5M3.6 -4.6L2.5 -3.5M-3.8 2.2L-2.7 1.2M3.8 2.2L2.7 1.2" stroke="#e8c81e" stroke-width="0.7"/><path d="M0 -3.4a2.3 2.3 0 0 1 2.3 2.3c0 1-0.8 1.5-1 2.5H-1.3C-1.5 0.4-2.3 -0.1-2.3 -1.1A2.3 2.3 0 0 1 0 -3.4z" fill="#f6e84a" stroke="#e3c928" stroke-width="0.4"/><rect x="-1.1" y="1.5" width="2.2" height="1.8" fill="#8a8650"/><rect x="-0.6" y="3.3" width="1.2" height="0.8" fill="#444"/></g><g transform="translate(50.40,244.85) scale(1)"><path d="M0 -4.8V1.4" stroke="#e6c21e" stroke-width="1.5"/><path d="M0 1.2L-3 3.6M0 1.2L3 3.6" stroke="#e6c21e" stroke-width="0.8"/><circle cx="-3.2" cy="3.8" r="1.2" fill="#3db85a"/><circle cx="3.2" cy="3.8" r="1.2" fill="#e0364e"/></g>
<path d="M7 256.1H14" stroke="#c4c4c4" stroke-width="0.7" stroke-dasharray="0.7 0.9"/><rect x="4.00" y="253.30" width="5.6" height="5.6" fill="#fff" stroke="#9c9c9c" stroke-width="0.6"/><path d="M5.20 256.10h3.2" stroke="#444" stroke-width="0.7"/><g transform="translate(19.00,256.10) scale(1)"><path d="M-4 -4.4h3.6v3.4l-1.2 1v4.6h-1.2v-4.6l-1.2-1z" fill="#e4e4e4" stroke="#8e8e8e" stroke-width="0.5"/><path d="M0.8 -3h3.4v3l-1.1 1v3.8h-1.2v-3.8l-1.1-1z" fill="#e4e4e4" stroke="#8e8e8e" stroke-width="0.5"/></g>
<path d="M19 267.35H27" stroke="#c4c4c4" stroke-width="0.7" stroke-dasharray="0.7 0.9"/><rect x="16.20" y="264.55" width="5.6" height="5.6" fill="#fff" stroke="#9c9c9c" stroke-width="0.6"/><path d="M17.40 267.35h3.2" stroke="#444" stroke-width="0.7"/><path d="M19.00 265.75v3.2" stroke="#444" stroke-width="0.7"/><g transform="translate(40.80,267.55) scale(0.86)"><path d="M0 -4.4a2.9 2.9 0 0 1 2.9 2.9c0 1.3-1 1.9-1.2 3.1H-1.7C-1.9 0.4-2.9 -0.2-2.9 -1.5A2.9 2.9 0 0 1 0 -4.4z" fill="#a6a6a8"/><rect x="-1.4" y="1.8" width="2.8" height="2" fill="#4e4e4e"/><rect x="-0.8" y="3.8" width="1.6" height="0.8" fill="#3a3a3a"/></g><g transform="translate(49.80,267.35) scale(1)"><path d="M-3.4 -4.6H3.2V1.8a3.3 3 0 0 1-6.6 0Z" fill="#f0c020" stroke="#c79a12" stroke-width="0.5"/><path d="M-0.8 -4.6V3.6" stroke="#fbe27a" stroke-width="1.6"/></g>
<path d="M19 278.6H27" stroke="#c4c4c4" stroke-width="0.7" stroke-dasharray="0.7 0.9"/><rect x="16.20" y="275.80" width="5.6" height="5.6" fill="#fff" stroke="#9c9c9c" stroke-width="0.6"/><path d="M17.40 278.60h3.2" stroke="#444" stroke-width="0.7"/><path d="M19.00 277.00v3.2" stroke="#444" stroke-width="0.7"/><g transform="translate(40.80,278.80) scale(0.86)"><path d="M0 -4.4a2.9 2.9 0 0 1 2.9 2.9c0 1.3-1 1.9-1.2 3.1H-1.7C-1.9 0.4-2.9 -0.2-2.9 -1.5A2.9 2.9 0 0 1 0 -4.4z" fill="#a6a6a8"/><rect x="-1.4" y="1.8" width="2.8" height="2" fill="#4e4e4e"/><rect x="-0.8" y="3.8" width="1.6" height="0.8" fill="#3a3a3a"/></g><g transform="translate(49.80,278.60) scale(1)"><rect x="-3.4" y="-4.7" width="6.6" height="9.4" fill="#f0c020" stroke="#c79a12" stroke-width="0.5"/><path d="M-0.8 -4.7V4.7" stroke="#fbe27a" stroke-width="1.6"/><path d="M-3.4 -4.7V4.7" stroke="#c79a12" stroke-width="0.6"/></g>
<path d="M19 289.85H27" stroke="#c4c4c4" stroke-width="0.7" stroke-dasharray="0.7 0.9"/><rect x="16.20" y="287.05" width="5.6" height="5.6" fill="#fff" stroke="#9c9c9c" stroke-width="0.6"/><path d="M17.40 289.85h3.2" stroke="#444" stroke-width="0.7"/><path d="M19.00 288.25v3.2" stroke="#444" stroke-width="0.7"/><g transform="translate(40.80,290.05) scale(0.86)"><path d="M0 -4.4a2.9 2.9 0 0 1 2.9 2.9c0 1.3-1 1.9-1.2 3.1H-1.7C-1.9 0.4-2.9 -0.2-2.9 -1.5A2.9 2.9 0 0 1 0 -4.4z" fill="#a6a6a8"/><rect x="-1.4" y="1.8" width="2.8" height="2" fill="#4e4e4e"/><rect x="-0.8" y="3.8" width="1.6" height="0.8" fill="#3a3a3a"/></g><g transform="translate(49.80,289.85) scale(1)"><rect x="-3.4" y="-4.7" width="6.6" height="9.4" fill="#f0c020" stroke="#c79a12" stroke-width="0.5"/><path d="M-0.8 -4.7V4.7" stroke="#fbe27a" stroke-width="1.6"/><path d="M-3.4 -4.7V4.7" stroke="#c79a12" stroke-width="0.6"/></g>
<path d="M19 301.1H27" stroke="#c4c4c4" stroke-width="0.7" stroke-dasharray="0.7 0.9"/><rect x="16.20" y="298.30" width="5.6" height="5.6" fill="#fff" stroke="#9c9c9c" stroke-width="0.6"/><path d="M17.40 301.10h3.2" stroke="#444" stroke-width="0.7"/><path d="M19.00 299.50v3.2" stroke="#444" stroke-width="0.7"/><g transform="translate(40.80,301.30) scale(0.86)"><path d="M0 -4.4a2.9 2.9 0 0 1 2.9 2.9c0 1.3-1 1.9-1.2 3.1H-1.7C-1.9 0.4-2.9 -0.2-2.9 -1.5A2.9 2.9 0 0 1 0 -4.4z" fill="#f3e02b"/><rect x="-1.4" y="1.8" width="2.8" height="2" fill="#5a5a3a"/><rect x="-0.8" y="3.8" width="1.6" height="0.8" fill="#3a3a3a"/></g><g transform="translate(49.80,301.10) scale(1)"><rect x="-3.4" y="-4.7" width="6.6" height="9.4" fill="#f0c020" stroke="#c79a12" stroke-width="0.5"/><path d="M-0.8 -4.7V4.7" stroke="#fbe27a" stroke-width="1.6"/><path d="M-3.4 -4.7V4.7" stroke="#c79a12" stroke-width="0.6"/></g>
<path d="M7 312.35H14" stroke="#c4c4c4" stroke-width="0.7" stroke-dasharray="0.7 0.9"/><rect x="4.00" y="309.55" width="5.6" height="5.6" fill="#fff" stroke="#9c9c9c" stroke-width="0.6"/><path d="M5.20 312.35h3.2" stroke="#444" stroke-width="0.7"/><g transform="translate(18.60,312.35) scale(0.82)"><path d="M-2.6 3.6a2.6 2.6 0 0 1-1.4-4.8a3 3 0 0 1 4.2-2.4a3.2 3.2 0 0 1 4.6 1.4a2.9 2.9 0 0 1-0.6 5.8z" fill="#fff" stroke="#4f9fd8" stroke-width="0.8"/></g>
<path d="M19 323.6H27" stroke="#c4c4c4" stroke-width="0.7" stroke-dasharray="0.7 0.9"/><rect x="16.20" y="320.80" width="5.6" height="5.6" fill="#fff" stroke="#9c9c9c" stroke-width="0.6"/><path d="M17.40 323.60h3.2" stroke="#444" stroke-width="0.7"/><path d="M19.00 322.00v3.2" stroke="#444" stroke-width="0.7"/><g transform="translate(40.80,323.80) scale(0.86)"><path d="M0 -4.4a2.9 2.9 0 0 1 2.9 2.9c0 1.3-1 1.9-1.2 3.1H-1.7C-1.9 0.4-2.9 -0.2-2.9 -1.5A2.9 2.9 0 0 1 0 -4.4z" fill="#a6a6a8"/><rect x="-1.4" y="1.8" width="2.8" height="2" fill="#4e4e4e"/><rect x="-0.8" y="3.8" width="1.6" height="0.8" fill="#3a3a3a"/></g><g transform="translate(50.40,323.60) scale(0.88)"><path d="M-2.8 3.4a2.6 2.6 0 0 1-1.6-4.6a3 3 0 0 1 4.2-2.2a3.2 3.2 0 0 1 4.6 1.4a2.8 2.8 0 0 1-0.4 5.4z" fill="#46617a" stroke="#8fc3e6" stroke-width="1.2"/><path d="M-2.4 0.2h2M1 0.2h2" stroke="#c5d5e0" stroke-width="0.8"/></g>
<path d="M19 334.85H27" stroke="#c4c4c4" stroke-width="0.7" stroke-dasharray="0.7 0.9"/><rect x="16.20" y="332.05" width="5.6" height="5.6" fill="#fff" stroke="#9c9c9c" stroke-width="0.6"/><path d="M17.40 334.85h3.2" stroke="#444" stroke-width="0.7"/><path d="M19.00 333.25v3.2" stroke="#444" stroke-width="0.7"/><g transform="translate(40.80,335.05) scale(0.86)"><path d="M0 -4.4a2.9 2.9 0 0 1 2.9 2.9c0 1.3-1 1.9-1.2 3.1H-1.7C-1.9 0.4-2.9 -0.2-2.9 -1.5A2.9 2.9 0 0 1 0 -4.4z" fill="#a6a6a8"/><rect x="-1.4" y="1.8" width="2.8" height="2" fill="#4e4e4e"/><rect x="-0.8" y="3.8" width="1.6" height="0.8" fill="#3a3a3a"/></g><g transform="translate(50.40,334.85) scale(0.88)"><path d="M-2.8 3.4a2.6 2.6 0 0 1-1.6-4.6a3 3 0 0 1 4.2-2.2a3.2 3.2 0 0 1 4.6 1.4a2.8 2.8 0 0 1-0.4 5.4z" fill="#46617a" stroke="#8fc3e6" stroke-width="1.2"/><path d="M-2.4 0.2h2M1 0.2h2" stroke="#c5d5e0" stroke-width="0.8"/></g>
<path d="M19 346.1H27" stroke="#c4c4c4" stroke-width="0.7" stroke-dasharray="0.7 0.9"/><rect x="16.20" y="343.30" width="5.6" height="5.6" fill="#fff" stroke="#9c9c9c" stroke-width="0.6"/><path d="M17.40 346.10h3.2" stroke="#444" stroke-width="0.7"/><path d="M19.00 344.50v3.2" stroke="#444" stroke-width="0.7"/><g transform="translate(40.80,346.30) scale(0.86)"><path d="M0 -4.4a2.9 2.9 0 0 1 2.9 2.9c0 1.3-1 1.9-1.2 3.1H-1.7C-1.9 0.4-2.9 -0.2-2.9 -1.5A2.9 2.9 0 0 1 0 -4.4z" fill="#a6a6a8"/><rect x="-1.4" y="1.8" width="2.8" height="2" fill="#4e4e4e"/><rect x="-0.8" y="3.8" width="1.6" height="0.8" fill="#3a3a3a"/></g><g transform="translate(50.40,346.10) scale(0.88)"><path d="M-2.8 3.4a2.6 2.6 0 0 1-1.6-4.6a3 3 0 0 1 4.2-2.2a3.2 3.2 0 0 1 4.6 1.4a2.8 2.8 0 0 1-0.4 5.4z" fill="#fff" stroke="#8e949b" stroke-width="0.8"/></g>
<path d="M19 357.35H27" stroke="#c4c4c4" stroke-width="0.7" stroke-dasharray="0.7 0.9"/><rect x="16.20" y="354.55" width="5.6" height="5.6" fill="#fff" stroke="#9c9c9c" stroke-width="0.6"/><path d="M17.40 357.35h3.2" stroke="#444" stroke-width="0.7"/><path d="M19.00 355.75v3.2" stroke="#444" stroke-width="0.7"/><g transform="translate(40.80,357.55) scale(0.86)"><path d="M0 -4.4a2.9 2.9 0 0 1 2.9 2.9c0 1.3-1 1.9-1.2 3.1H-1.7C-1.9 0.4-2.9 -0.2-2.9 -1.5A2.9 2.9 0 0 1 0 -4.4z" fill="#a6a6a8"/><rect x="-1.4" y="1.8" width="2.8" height="2" fill="#4e4e4e"/><rect x="-0.8" y="3.8" width="1.6" height="0.8" fill="#3a3a3a"/></g><g transform="translate(50.40,357.35) scale(0.88)"><path d="M-2.8 3.4a2.6 2.6 0 0 1-1.6-4.6a3 3 0 0 1 4.2-2.2a3.2 3.2 0 0 1 4.6 1.4a2.8 2.8 0 0 1-0.4 5.4z" fill="#fff" stroke="#8e949b" stroke-width="0.8"/></g>
<path d="M19 368.6H27" stroke="#c4c4c4" stroke-width="0.7" stroke-dasharray="0.7 0.9"/><rect x="16.20" y="365.80" width="5.6" height="5.6" fill="#fff" stroke="#9c9c9c" stroke-width="0.6"/><path d="M17.40 368.60h3.2" stroke="#444" stroke-width="0.7"/><path d="M19.00 367.00v3.2" stroke="#444" stroke-width="0.7"/><g transform="translate(40.80,368.80) scale(0.86)"><path d="M0 -4.4a2.9 2.9 0 0 1 2.9 2.9c0 1.3-1 1.9-1.2 3.1H-1.7C-1.9 0.4-2.9 -0.2-2.9 -1.5A2.9 2.9 0 0 1 0 -4.4z" fill="#a6a6a8"/><rect x="-1.4" y="1.8" width="2.8" height="2" fill="#4e4e4e"/><rect x="-0.8" y="3.8" width="1.6" height="0.8" fill="#3a3a3a"/></g><g transform="translate(50.40,368.60) scale(0.88)"><path d="M-2.8 3.4a2.6 2.6 0 0 1-1.6-4.6a3 3 0 0 1 4.2-2.2a3.2 3.2 0 0 1 4.6 1.4a2.8 2.8 0 0 1-0.4 5.4z" fill="#46617a" stroke="#8fc3e6" stroke-width="1.2"/><path d="M-2.4 0.2h2M1 0.2h2" stroke="#c5d5e0" stroke-width="0.8"/></g>
<path d="M7 379.85H14" stroke="#c4c4c4" stroke-width="0.7" stroke-dasharray="0.7 0.9"/><rect x="4.00" y="377.05" width="5.6" height="5.6" fill="#fff" stroke="#9c9c9c" stroke-width="0.6"/><path d="M5.20 379.85h3.2" stroke="#444" stroke-width="0.7"/><g transform="translate(19.00,379.85) scale(1)"><path d="M-4.4 -4.4Q0 -0.2 4.4 -4.4Q0.2 0 4.4 4.4Q0 0.2 -4.4 4.4Q-0.2 0 -4.4 -4.4Z" fill="#f2fafe" stroke="#3a98d4" stroke-width="0.8"/></g>
<path d="M19 391.1H27" stroke="#c4c4c4" stroke-width="0.7" stroke-dasharray="0.7 0.9"/><g transform="translate(40.80,391.30) scale(0.86)"><path d="M0 -4.4a2.9 2.9 0 0 1 2.9 2.9c0 1.3-1 1.9-1.2 3.1H-1.7C-1.9 0.4-2.9 -0.2-2.9 -1.5A2.9 2.9 0 0 1 0 -4.4z" fill="#a6a6a8"/><rect x="-1.4" y="1.8" width="2.8" height="2" fill="#4e4e4e"/><rect x="-0.8" y="3.8" width="1.6" height="0.8" fill="#3a3a3a"/></g><g transform="translate(50.40,391.10) scale(1)"><path d="M-4.4 -4.4Q0 -0.2 4.4 -4.4Q0.2 0 4.4 4.4Q0 0.2 -4.4 4.4Q-0.2 0 -4.4 -4.4Z" fill="#f2fafe" stroke="#3a98d4" stroke-width="0.8"/></g>
<path d="M19 402.35H27" stroke="#c4c4c4" stroke-width="0.7" stroke-dasharray="0.7 0.9"/><g transform="translate(40.80,402.55) scale(0.86)"><path d="M0 -4.4a2.9 2.9 0 0 1 2.9 2.9c0 1.3-1 1.9-1.2 3.1H-1.7C-1.9 0.4-2.9 -0.2-2.9 -1.5A2.9 2.9 0 0 1 0 -4.4z" fill="#a6a6a8"/><rect x="-1.4" y="1.8" width="2.8" height="2" fill="#4e4e4e"/><rect x="-0.8" y="3.8" width="1.6" height="0.8" fill="#3a3a3a"/></g><g transform="translate(50.40,402.35) scale(1)"><path d="M-4.4 -4.4Q0 -0.2 4.4 -4.4Q0.2 0 4.4 4.4Q0 0.2 -4.4 4.4Q-0.2 0 -4.4 -4.4Z" fill="#f2fafe" stroke="#3a98d4" stroke-width="0.8"/></g>
<path d="M19 413.6H27" stroke="#c4c4c4" stroke-width="0.7" stroke-dasharray="0.7 0.9"/><g transform="translate(40.80,413.80) scale(0.86)"><path d="M0 -4.4a2.9 2.9 0 0 1 2.9 2.9c0 1.3-1 1.9-1.2 3.1H-1.7C-1.9 0.4-2.9 -0.2-2.9 -1.5A2.9 2.9 0 0 1 0 -4.4z" fill="#a6a6a8"/><rect x="-1.4" y="1.8" width="2.8" height="2" fill="#4e4e4e"/><rect x="-0.8" y="3.8" width="1.6" height="0.8" fill="#3a3a3a"/></g><g transform="translate(50.40,413.60) scale(1)"><path d="M-4.4 -4.4Q0 -0.2 4.4 -4.4Q0.2 0 4.4 4.4Q0 0.2 -4.4 4.4Q-0.2 0 -4.4 -4.4Z" fill="#f2fafe" stroke="#3a98d4" stroke-width="0.8"/></g>
<path d="M7 424.85H14" stroke="#c4c4c4" stroke-width="0.7" stroke-dasharray="0.7 0.9"/><g transform="translate(19.00,424.85) scale(1)"><path d="M-4.6 2.4L-1 -1.2H4.4L1 2.4Z" fill="#c9ccd4" stroke="#9a9eaa" stroke-width="0.4"/><path d="M-1.6 -4.6h3.2a1.8 1.8 0 0 1 0 5h-3.2z" fill="#3f86d9"/><path d="M-1.6 -4.6h1.4v5h-1.4z" fill="#7ab3ee"/></g>
<path d="M7 436.1H14" stroke="#c4c4c4" stroke-width="0.7" stroke-dasharray="0.7 0.9"/><g transform="translate(19.00,436.10) scale(1)"><path d="M-4.4 4.6V1.6H-1.6V-0.6H1.8V1.6H4.6V4.6Z" fill="#2d62c8"/><circle cx="0.2" cy="-2.8" r="1.9" fill="#b9b3c0" stroke="#9a93a4" stroke-width="0.4"/><rect x="-0.6" y="-1.2" width="1.6" height="2.4" fill="#c03a4a"/></g>
<path d="M7 447.35H14" stroke="#c4c4c4" stroke-width="0.7" stroke-dasharray="0.7 0.9"/><rect x="4.00" y="444.55" width="5.6" height="5.6" fill="#fff" stroke="#9c9c9c" stroke-width="0.6"/><path d="M5.20 447.35h3.2" stroke="#444" stroke-width="0.7"/><g transform="translate(19.00,447.35) scale(1)"><path d="M-3.8 -4.6V4.2" stroke="#5aa7de" stroke-width="0.8"/><path d="M-3.6 4.1H4.4" stroke="#c9505f" stroke-width="0.8"/><path d="M-1.4 1.4L2.2 -1.4" stroke="#49a55c" stroke-width="0.8"/></g>
<path d="M19 458.6H27" stroke="#c4c4c4" stroke-width="0.7" stroke-dasharray="0.7 0.9"/><g transform="translate(40.80,458.80) scale(0.86)"><path d="M0 -4.4a2.9 2.9 0 0 1 2.9 2.9c0 1.3-1 1.9-1.2 3.1H-1.7C-1.9 0.4-2.9 -0.2-2.9 -1.5A2.9 2.9 0 0 1 0 -4.4z" fill="#a6a6a8"/><rect x="-1.4" y="1.8" width="2.8" height="2" fill="#4e4e4e"/><rect x="-0.8" y="3.8" width="1.6" height="0.8" fill="#3a3a3a"/></g><g transform="translate(50.00,458.60) scale(1)"><path d="M-3.8 -4.6V4.2" stroke="#5aa7de" stroke-width="0.8"/><path d="M-3.6 4.1H4.4" stroke="#c9505f" stroke-width="0.8"/><path d="M-1.4 1.4L2.2 -1.4" stroke="#49a55c" stroke-width="0.8"/></g>
<path d="M19 469.85H27" stroke="#c4c4c4" stroke-width="0.7" stroke-dasharray="0.7 0.9"/><g transform="translate(40.80,470.05) scale(0.86)"><path d="M0 -4.4a2.9 2.9 0 0 1 2.9 2.9c0 1.3-1 1.9-1.2 3.1H-1.7C-1.9 0.4-2.9 -0.2-2.9 -1.5A2.9 2.9 0 0 1 0 -4.4z" fill="#a6a6a8"/><rect x="-1.4" y="1.8" width="2.8" height="2" fill="#4e4e4e"/><rect x="-0.8" y="3.8" width="1.6" height="0.8" fill="#3a3a3a"/></g><g transform="translate(50.00,469.85) scale(1)"><path d="M-3.8 -4.6V4.2" stroke="#5aa7de" stroke-width="0.8"/><path d="M-3.6 4.1H4.4" stroke="#c9505f" stroke-width="0.8"/><path d="M-1.4 1.4L2.2 -1.4" stroke="#49a55c" stroke-width="0.8"/></g>
<path d="M19 481.1H27" stroke="#c4c4c4" stroke-width="0.7" stroke-dasharray="0.7 0.9"/><g transform="translate(40.80,481.30) scale(0.95)"><path d="M0 -5.4V-3.8M-4.6 -1.2H-3.2M4.6 -1.2H3.2M-3.6 -4.6L-2.5 -3.5M3.6 -4.6L2.5 -3.5M-3.8 2.2L-2.7 1.2M3.8 2.2L2.7 1.2" stroke="#e8c81e" stroke-width="0.7"/><path d="M0 -3.4a2.3 2.3 0 0 1 2.3 2.3c0 1-0.8 1.5-1 2.5H-1.3C-1.5 0.4-2.3 -0.1-2.3 -1.1A2.3 2.3 0 0 1 0 -3.4z" fill="#f6e84a" stroke="#e3c928" stroke-width="0.4"/><rect x="-1.1" y="1.5" width="2.2" height="1.8" fill="#8a8650"/><rect x="-0.6" y="3.3" width="1.2" height="0.8" fill="#444"/></g><g transform="translate(50.00,481.10) scale(1)"><path d="M-3.8 -4.6V4.2" stroke="#5aa7de" stroke-width="0.8"/><path d="M-3.6 4.1H4.4" stroke="#c9505f" stroke-width="0.8"/><path d="M-1.4 1.4L2.2 -1.4" stroke="#49a55c" stroke-width="0.8"/></g>
<path d="M19 492.35H27" stroke="#c4c4c4" stroke-width="0.7" stroke-dasharray="0.7 0.9"/><g transform="translate(40.80,492.55) scale(0.86)"><path d="M0 -4.4a2.9 2.9 0 0 1 2.9 2.9c0 1.3-1 1.9-1.2 3.1H-1.7C-1.9 0.4-2.9 -0.2-2.9 -1.5A2.9 2.9 0 0 1 0 -4.4z" fill="#a6a6a8"/><rect x="-1.4" y="1.8" width="2.8" height="2" fill="#4e4e4e"/><rect x="-0.8" y="3.8" width="1.6" height="0.8" fill="#3a3a3a"/></g><g transform="translate(50.00,492.35) scale(1)"><path d="M-3.8 -4.6V4.2" stroke="#5aa7de" stroke-width="0.8"/><path d="M-3.6 4.1H4.4" stroke="#c9505f" stroke-width="0.8"/><path d="M-1.4 1.4L2.2 -1.4" stroke="#49a55c" stroke-width="0.8"/></g>
<path d="M7 503.6H14" stroke="#c4c4c4" stroke-width="0.7" stroke-dasharray="0.7 0.9"/><rect x="4.00" y="500.80" width="5.6" height="5.6" fill="#fff" stroke="#9c9c9c" stroke-width="0.6"/><path d="M5.20 503.60h3.2" stroke="#444" stroke-width="0.7"/><path d="M6.80 502.00v3.2" stroke="#444" stroke-width="0.7"/><g transform="translate(19.00,503.60) scale(1)"><path d="M-4.4 2.6L0 0.8L4.4 2.6L0 4.6Z" fill="#3f8fdc"/><path d="M-4.4 0L0 -1.8L4.4 0L0 2Z" fill="#f1d433"/><path d="M-4.4 -2.6L0 -4.6L4.4 -2.6L0 -0.6Z" fill="#48b868"/><path d="M-4.4 -2.6v2.6M4.4 -2.6v2.6" stroke="#48b868" stroke-width="0.8"/></g>
<path d="M7 514.85H14" stroke="#c4c4c4" stroke-width="0.7" stroke-dasharray="0.7 0.9"/><rect x="4.00" y="512.05" width="5.6" height="5.6" fill="#fff" stroke="#9c9c9c" stroke-width="0.6"/><path d="M5.20 514.85h3.2" stroke="#444" stroke-width="0.7"/><path d="M6.80 513.25v3.2" stroke="#444" stroke-width="0.7"/><g transform="translate(19.00,514.85) scale(1)"><rect x="-4.6" y="-4" width="9.2" height="8" fill="#d7d9dd" stroke="#9b9ea5" stroke-width="0.6"/><rect x="-2.8" y="-2.4" width="5" height="4.4" fill="#8fb6df"/><path d="M-2.8 2L0 -0.6L2.2 2" fill="#f4f6f8"/></g>
<path d="M7 526.1H14" stroke="#c4c4c4" stroke-width="0.7" stroke-dasharray="0.7 0.9"/><g transform="translate(19.00,526.10) scale(1)"><path d="M0 -3.6L5 0L0 3.8L-5 0Z" fill="#3f8fdc"/><path d="M0 -3.6L5 0L0 1.2L-5 0Z" fill="#7db9ef"/></g>
<path d="M7 537.35H14" stroke="#c4c4c4" stroke-width="0.7" stroke-dasharray="0.7 0.9"/><g transform="translate(19.00,537.35) scale(1)"><path d="M-4.4 4.2V-3.8H-1.4L-0.4 -2.6H3.2V-1" fill="#a9cdf1" stroke="#3f86d9" stroke-width="0.7"/><path d="M-4.4 4.2L-2.4 -1H4.8L2.8 4.2Z" fill="#4f98e3" stroke="#2f78c8" stroke-width="0.5"/></g>
<path d="M7 548.6H14" stroke="#c4c4c4" stroke-width="0.7" stroke-dasharray="0.7 0.9"/><rect x="4.00" y="545.80" width="5.6" height="5.6" fill="#fff" stroke="#9c9c9c" stroke-width="0.6"/><path d="M5.20 548.60h3.2" stroke="#444" stroke-width="0.7"/><path d="M6.80 547.00v3.2" stroke="#444" stroke-width="0.7"/><g transform="translate(19.00,548.60) scale(1)"><rect x="-4.6" y="-4.2" width="8" height="6.6" fill="#eef0f2" stroke="#6f737a" stroke-width="0.7"/><path d="M-3 -2.4h2.4M-3 -0.8h1.6" stroke="#6f737a" stroke-width="0.6"/><circle cx="2.6" cy="2.4" r="2.5" fill="#2fb457" stroke="#fff" stroke-width="0.5"/><path d="M1.9 1.2L3.8 2.4L1.9 3.6Z" fill="#fff"/></g>
</svg>
<span class="r" style="left:27.2px;top:3.90px">Активный</span>
<span class="r" style="left:27.2px;top:15.15px">Станки</span>
<span class="r" style="left:27.2px;top:26.40px">NC-файлы</span>
<span class="r" style="left:27.2px;top:37.65px">Установы</span>
<span class="r b" style="left:27.2px;top:48.90px">Траектории</span>
<span class="r" style="left:58.7px;top:60.15px">Черновая</span>
<span class="r" style="left:58.7px;top:71.40px">Черновая_2</span>
<span class="r" style="left:58.7px;top:82.65px">Выборка</span>
<span class="r" style="left:58.7px;top:93.90px">Выборка 2</span>
<span class="r b" style="left:58.7px;top:105.15px">&gt; 1</span>
<span class="r b" style="left:27.2px;top:116.40px">Инструменты</span>
<span class="r" style="left:58.7px;top:127.65px">T1-16x40</span>
<span class="r" style="left:58.7px;top:138.90px">T2-12x60</span>
<span class="r" style="left:58.7px;top:150.15px">T3-8x35</span>
<span class="r b" style="left:58.7px;top:161.40px">&gt; T4-55x120</span>
<span class="r" style="left:27.2px;top:172.65px">Границы</span>
<span class="r" style="left:58.7px;top:183.90px">Граница 1</span>
<span class="r" style="left:58.7px;top:195.15px">Граница 2</span>
<span class="r" style="left:58.7px;top:206.40px">1</span>
<span class="r" style="left:58.7px;top:217.65px">1_1</span>
<span class="r" style="left:58.7px;top:228.90px">Гр2</span>
<span class="r b" style="left:27.2px;top:240.15px">Шаблоны</span>
<span class="r" style="left:58.7px;top:251.40px">Граница 2</span>
<span class="r" style="left:58.7px;top:262.65px">1</span>
<span class="r b" style="left:58.7px;top:273.90px">&gt; Гр2</span>
<span class="r" style="left:27.2px;top:285.15px">Группы элементов</span>
<span class="r" style="left:27.2px;top:296.40px">Наборы отверстий</span>
<span class="r b" style="left:27.2px;top:307.65px">Локальные СК</span>
<span class="r" style="left:58.7px;top:318.90px">Основная</span>
<span class="r" style="left:58.7px;top:330.15px">Основная_180</span>
<span class="r b" style="left:58.7px;top:341.40px">&gt; Основная_90</span>
<span class="r" style="left:58.7px;top:352.65px">Для станка</span>
<span class="r" style="left:27.2px;top:363.90px">Слои, наборы и прижимы</span>
<span class="r" style="left:27.2px;top:375.15px">Модели</span>
<span class="r" style="left:27.2px;top:386.40px">Модели материала</span>
<span class="r" style="left:27.2px;top:397.65px">Группы</span>
<span class="r" style="left:27.2px;top:408.90px">Макросы</span>
</div>
<div id="expborder" class="abs"></div>
<div id="view" class="abs">
<svg style="left:0;top:0" width="1009" height="538" viewBox="158 91 1009 538">
<defs>
<linearGradient id="face" x1="0" y1="0" x2="0" y2="1"><stop offset="0" stop-color="#e0e0e9"/><stop offset="1" stop-color="#dcdce6"/></linearGradient>
<linearGradient id="toolg" gradientUnits="userSpaceOnUse" x1="0" y1="376" x2="0" y2="426"><stop offset="0" stop-color="#c0c0c0"/><stop offset="1" stop-color="#adadad"/></linearGradient>
<clipPath id="vclip"><rect x="158" y="91" width="1009" height="538"/></clipPath>
</defs>
<g clip-path="url(#vclip)" fill="none">
<!-- green lines left (upper) -->
<path d="M408.8 91L455 222" stroke="#52d866" stroke-width="1.1"/>
<path d="M414.6 91L472 288" stroke="#52d866" stroke-width="1.1"/>
<!-- green lines right (behind block) -->
<path d="M543.6 146L624 398" stroke="#62d877" stroke-width="1.2"/>
<path d="M549.3 171.3L620.7 399" stroke="#62d877" stroke-width="1.2"/>
<path d="M571.6 255.7L615 399.5" stroke="#62d877" stroke-width="1.2"/>
<!-- orange large rectangle -->
<path d="M583.5 91L663 386.3L617.5 401.5" stroke="#f09a44" stroke-width="1.4"/>
<path d="M585.4 91L664.6 384.6" stroke="#f3a558" stroke-width="0.7" opacity="0.8"/>
<path d="M661 389.5L618.5 403.6" stroke="#f3a558" stroke-width="0.8" opacity="0.8"/>
<!-- orange clamps right -->
<g stroke="#f0a050" stroke-width="1.25">
<path d="M594.8 327.6L652.6 317.6"/>
<path d="M594.8 334.4L654 324"/>
<path d="M600.7 331.5L656 337.2a2.4 2.4 0 0 1 0 4.8L602.2 336" fill="rgba(240,160,80,.3)"/>
<path d="M597.8 347.8L639.3 336"/>
<path d="M640 318L650 340"/>
</g>
<!-- orange clamps left -->
<g stroke="#f0a050" stroke-width="1.25">
<path d="M431.9 359L494 363.2"/>
<path d="M495 370.8L439.4 379.6a1.6 1.6 0 0 0 0.4 3.2L495 374.6" fill="rgba(240,160,80,.4)"/>
<path d="M495.4 372.8L445 401.4a1.8 1.8 0 0 0 1.8 3.2L495.6 376.8" fill="rgba(240,160,80,.4)"/>
</g>
<!-- green bottom-left -->
<path d="M512.2 398L517.7 428.7" stroke="#5cd672" stroke-width="1.2"/>
<path d="M518.2 398L523.2 428.7" stroke="#66d6c8" stroke-width="0.8"/>
<path d="M524 398L528 428.7" stroke="#5cd672" stroke-width="1.2"/>
<!-- block: main face -->
<path d="M420.2 91L524.8 91L599.3 367.6L502.6 393.8Z" fill="url(#face)"/>
<!-- dark right side + bottom band -->
<path d="M524.8 91L528.2 91L603.2 375.6L599.3 367.6Z" fill="#2b2b2b"/>
<path d="M502.6 393.8L599.3 367.6L603.2 375.6L508.2 401.2Z" fill="#1c1c1c"/>
<!-- tool (grey) -->
<path d="M547 382L572.6 375L585 417.6L558 425.5Z" fill="url(#toolg)"/>
<path d="M547 382L558 425.5" stroke="#333" stroke-width="0.7"/>
<path d="M573.4 377L585 417.6" stroke="#333" stroke-width="1"/>
<path d="M580.2 383L588.6 418" stroke="#fff" stroke-width="3"/><path d="M583 384L591 416.8" stroke="#3a3a3a" stroke-width="0.6"/>
<!-- dotted slot lines -->
<g stroke="#222" stroke-width="0.7" stroke-dasharray="1 1.1">
<path d="M447.4 91L531.8 331.4L559.4 325.5L476.8 91"/>
<path d="M547 382L540.3 359.8L567.6 352.7L572.6 374"/>
</g>
<!-- magenta -->
<path d="M431.6 91L520.9 418.4L661.8 384.3" stroke="#e040e0" stroke-width="0.95"/>
<path d="M434.6 91L523.6 417.6" stroke="#e040e0" stroke-width="0.95"/>
<circle cx="661.5" cy="385.4" r="1.3" fill="#e86060"/>
<!-- axis triad -->
<path d="M558 425L585 417.1L591.8 416.8L592.9 423.9L561.8 431.8Z" fill="#2c2c28"/>
<path d="M576 419.8L585 417.1L591.8 416.8L592.9 423.9L578 427.6Z" fill="#34567c"/>
<path d="M534.4 434.8L548.6 428.6L549.2 431.2L561.2 427.8L562 430.6L550 434L550.4 437Z" fill="#3a9a44"/>
<path d="M547.5 435.7L561.8 431.2" stroke="#fff" stroke-width="1.9"/>
<circle cx="571.1" cy="420.5" r="2.3" fill="#d41c48"/><circle cx="574.3" cy="425.2" r="2.4" fill="#e8821e"/>
<circle cx="567" cy="427.2" r="1.6" fill="#2f8f3c"/>
</g>
<g font-family="Liberation Sans, sans-serif" font-size="8.4" fill="#fff">
<text x="574.8" y="416.8">Z</text><text x="593.5" y="416">X</text><text x="538.6" y="431.6" font-size="7.6">Y</text>
</g>
<!-- mini axis bottom-left -->
<path d="M171.6 613.6L172.8 600.6" stroke="#d8d8d8" stroke-width="0.7"/>
<path d="M160 619L171.6 613.6L176.4 608" stroke="#7a2030" stroke-width="0.8" fill="none"/>
<circle cx="171.7" cy="613.8" r="1.3" fill="#e81848"/><circle cx="174.6" cy="610" r="1" fill="#e81848"/>
<g font-family="Liberation Sans, sans-serif" font-size="7.4">
<text x="170.3" y="599.8" fill="#dcdcdc">X</text><text x="174.6" y="608.4" fill="#e82040">Z</text><text x="160" y="616.4" fill="#d81838">Y</text>
</g>
</svg>
<div class="abs" style="left:952.8px;top:18.8px;width:33px;height:33px;background:#ececec;border:1.4px solid #f6f6f6;box-shadow:0 0 2px rgba(120,120,120,.45);transform:rotate(-15deg)"></div>
<span class="t" style="left:960.4px;top:31.6px;font-size:7px;color:#a3a3ad;transform:rotate(-105deg);transform-origin:50% 50%">Верх</span>
</div>
<div id="rtool" class="abs">
<div class="abs" style="left:5px;top:217px;width:26px;height:23px;background:#cce4f9"></div>
<div class="abs" style="left:5px;top:276px;width:26px;height:24px;background:#cce4f9"></div>
<svg style="left:0;top:0" width="33" height="538" viewBox="1167 91 33 538">
<!-- 1 machine -->
<g transform="translate(1175.6,117)">
<rect x="0.4" y="0.4" width="3.4" height="19.6" fill="#dcdce6" stroke="#cfc3cc" stroke-width="0.4"/>
<rect x="3.8" y="3.6" width="9" height="4.4" fill="#38a3b2"/>
<path d="M12.8 2h4.6v7.4l-1 1.4h-2.6l-1-1.4z" fill="#e6eef2" stroke="#cdd8de" stroke-width="0.4"/>
<rect x="14" y="10.8" width="2.4" height="2.6" fill="#eea32a"/>
<rect x="3.8" y="14.6" width="13" height="4.6" fill="#2fa6a4"/>
<path d="M19.4 20.4v-3l-3 3z" fill="#111"/>
</g>
<!-- 2 wire cube blue top -->
<g transform="translate(1175.4,142.2)" fill="none" stroke="#3c3c3c" stroke-width="0.8">
<path d="M0.6 5.6L5.4 0.6H19L14.2 5.6Z" fill="#4f9fe8" stroke="#2f7fcf"/>
<rect x="0.6" y="5.6" width="13.6" height="13.6"/><path d="M19 0.6V14.4L14.2 19.2"/><path d="M5.4 0.6V14.4H19M5.4 14.4L0.6 19.2" stroke-width="0.5"/>
<path d="M20 20.4v-3l-3 3z" fill="#111" stroke="none"/>
</g>
<!-- 3 iso cube -->
<g transform="translate(1176,167.6)" fill="none" stroke="#6a6a6a" stroke-width="0.8">
<path d="M9.4 0.6L18.2 5V13.6L9.4 18.2L0.6 13.6V5Z" fill="#fff"/>
<path d="M0.6 5L9.4 9.6L18.2 5M9.4 9.6V18.2"/>
<path d="M5 7.4L9.4 9.6L13.8 7.4L9.4 16Z" fill="#4f9fe8" stroke="none"/>
<path d="M19.6 19.4v-3l-3 3z" fill="#111" stroke="none"/>
</g>
<!-- 4 zoom + refresh -->
<g transform="translate(1174.6,193)" fill="none">
<circle cx="6.6" cy="10" r="4.8" stroke="#4a4a4a" stroke-width="1.3"/><path d="M10.2 13.6L15 18.6" stroke="#4a4a4a" stroke-width="2"/>
<path d="M13.2 8.6A4 4 0 1 0 12 2.4" stroke="#2581dc" stroke-width="1.5"/><path d="M10.4 0.4L12.4 3.2L15.4 1.8" stroke="#2581dc" stroke-width="1.2"/>
</g>
<!-- 5 page refresh -->
<g transform="translate(1176,221)" fill="none">
<path d="M0.6 0.6H8.6L13.6 5.6V19.6H0.6Z" fill="#fff" stroke="#9a9a9a" stroke-width="0.8"/><path d="M8.6 0.6V5.6H13.6Z" fill="#4a4a4a"/>
<path d="M8.6 15.6a3.6 3.6 0 0 1 6.6-2M16 16.4a3.6 3.6 0 0 1-6.6 2" stroke="#2581dc" stroke-width="1.5"/><path d="M15.8 10.8v3h-3M8.8 21v-3h3" stroke="#2581dc" stroke-width="1"/>
</g>
<!-- 6 zoom fit -->
<g transform="translate(1174.6,250.4)" fill="none">
<circle cx="6" cy="12" r="4.6" stroke="#4a4a4a" stroke-width="1.3"/><path d="M9.4 15.6L14.4 20.4" stroke="#4a4a4a" stroke-width="2"/>
<rect x="10.6" y="0.6" width="8.4" height="8.4" fill="#fff" stroke="#6a6a6a" stroke-width="0.7"/><path d="M12 2l2 2M17.6 2l-2 2M12 7.6l2-2M17.6 7.6l-2-2" stroke="#555" stroke-width="0.8"/>
</g>
<!-- 7 zoom box -->
<g transform="translate(1174.6,280)" fill="none">
<circle cx="6" cy="11.6" r="4.6" stroke="#4a4a4a" stroke-width="1.3"/><path d="M9.4 15.2L14.4 20" stroke="#4a4a4a" stroke-width="2"/>
<rect x="11.6" y="0.8" width="8" height="5.6" fill="#fff" stroke="#6a6a6a" stroke-width="0.7"/>
<path d="M20.6 20.4v-3l-3 3z" fill="#111"/>
</g>
<!-- 8 blue shaded cube -->
<g transform="translate(1175.4,310)">
<path d="M0.6 5.4L5.4 0.6H19.4L14.6 5.4Z" fill="#8fc8f6"/><path d="M0.6 5.4H14.6V19.4H0.6Z" fill="#4d9fe6"/><path d="M14.6 5.4L19.4 0.6V14.6L14.6 19.4Z" fill="#2b7fd0"/>
<path d="M0.6 19.4L14.6 5.4" stroke="#6fb4ee" stroke-width="0.5"/>
<path d="M21.4 20.6v-3l-3 3z" fill="#111"/>
</g>
<!-- 9 wire cube -->
<g transform="translate(1175.4,339.6)" fill="none" stroke="#3c3c3c" stroke-width="0.8">
<path d="M0.6 5.6L5.4 0.6H19.2L14.4 5.6Z"/><rect x="0.6" y="5.6" width="13.8" height="13.8"/><path d="M19.2 0.6V14.4L14.4 19.4"/>
<path d="M5.4 0.6V14.4H19.2M5.4 14.4L0.6 19.4" stroke-width="0.5"/>
</g>
<!-- 10 blue wire cube -->
<g transform="translate(1175.4,369.4)" fill="none" stroke="#2c78c6" stroke-width="0.8">
<path d="M0.6 5.6L5.4 0.6H19.2V14.4L14.4 19.4H0.6Z" fill="#7fbdf2"/>
<path d="M0.6 5.6H14.4V19.4M14.4 5.6L19.2 0.6"/><path d="M5.4 0.6V14.4H19.2M5.4 14.4L0.6 19.4" stroke-width="0.5"/>
</g>
<!-- 11 cursor + box -->
<g transform="translate(1175.4,399.4)" fill="none">
<path d="M5.4 6.6H0.6V16.6H18.6V6.6H15" stroke="#555" stroke-width="0.9"/>
<path d="M7 0.4L14.6 8.6L10.8 8.8L12.6 12.6L10.8 13.4L9 9.8L7 12.2Z" fill="#1f7bdc"/>
<path d="M20.6 17.6v-3l-3 3z" fill="#111"/>
</g>
<!-- 12 cursor + undo -->
<g transform="translate(1174.4,422)" fill="none">
<path d="M0.8 2.6L12 13.6L6.6 14L9.4 19.2L7 20.4L4.2 15.2L0.8 18.6Z" fill="#1f7bdc"/>
<path d="M13.4 3.6A3.4 3.4 0 1 1 13.6 9" stroke="#555" stroke-width="0.8"/><path d="M12.2 1.6L13.4 4L15.8 3.2" stroke="#555" stroke-width="0.7"/>
</g>
</svg>
</div>
<div id="rthead" class="abs">
<svg style="left:23.4px;top:7.4px" width="6" height="6" viewBox="0 0 6 6"><path d="M1 1L5 5M5 1L1 5" stroke="#555" stroke-width="0.9"/></svg>
<div class="abs" style="left:31.4px;top:9.8px;width:1.6px;height:1px;background:#777"></div>
</div>
<div id="rtborder" class="abs" style="left:1166px;top:91px;width:1px;height:538px;background:linear-gradient(rgba(0,0,0,.17),rgba(0,0,0,.05))"></div>
<div id="status" class="abs">
<svg style="left:0;top:0" width="800" height="21" viewBox="0 629 800 21">
<path d="M4 632.4V646" stroke="#7ec3e6" stroke-width="0.9"/><path d="M4.2 645.6L15.6 633.4" stroke="#4aa564" stroke-width="0.9"/><path d="M3.6 646.2H15" stroke="#b9485a" stroke-width="0.9"/>
<circle cx="15.8" cy="633.2" r="0.9" fill="#4aa564"/><path d="M17.4 647v-2.6l-2.6 2.6z" fill="#111"/>
<rect x="20" y="634.6" width="54.4" height="12" fill="#e3e3e3"/>
<path d="M67.6 639.4L70 641.8L72.4 639.4" fill="none" stroke="#555" stroke-width="0.8"/>
<rect x="78.8" y="633" width="14.4" height="14.2" fill="#c9e1f6"/>
<g fill="none">
<path d="M81 635.6L85.6 634.2L90.6 636.4L86 638.4Z" fill="#3f8fdc"/><path d="M81 635.6V640L86 643V638.4Z" fill="#5aa4e6"/><path d="M86 638.4L90.6 636.4V640.6L86 643Z" fill="#2b78c8"/>
<path d="M84 641.4L81 645.6M86.6 642L90.6 645.4" stroke="#444" stroke-width="0.7"/>
<path d="M100 636L104 634.4L108.4 636.4L104.2 638.2Z" fill="#3f8fdc"/><path d="M100 636V640L104.2 642.6V638.2Z" fill="#5aa4e6"/><path d="M104.2 638.2L108.4 636.4V640.4L104.2 642.6Z" fill="#2b78c8"/>
<path d="M102.6 641L99 644.6M103.6 642.6V646.6" stroke="#3a8a4a" stroke-width="0.7"/>
<path d="M113 643L118.4 640.6L124 643L118.4 646.2Z" fill="#4a9ae2"/><path d="M118.4 633.8V641M116.4 636L118.4 633.8L120.4 636" stroke="#2b78c8" stroke-width="0.9"/><path d="M114.4 635v4M122.6 635v4" stroke="#888" stroke-width="0.6"/>
<rect x="131.6" y="639.6" width="8" height="7" rx="0.8" fill="#555"/><rect x="132.8" y="640.8" width="5.6" height="4.6" fill="#8d8d8d"/>
<path d="M133.4 639.6v-3a2.3 2.3 0 0 1 4.6 0" stroke="#333" stroke-width="1"/><path d="M130 636.4h3.6" stroke="#333" stroke-width="0.9"/>
</g>
<g stroke="#cfcfcf" stroke-width="0.6" fill="none"><path d="M153.4 636.6h11.6M153.4 639.8h11.6M153.4 643h11.6M153.4 646.2h11.6M155 634.2v13M158.2 634.2v13M161.4 634.2v13M164.6 634.2v13"/></g>
<rect x="168.6" y="633.6" width="31.4" height="13.8" fill="#f2f2f2" stroke="#dfdfdf" stroke-width="0.6"/>
<rect x="323.2" y="633.6" width="12.4" height="13.8" fill="#f2f2f2" stroke="#d8d8d8" stroke-width="0.6"/><rect x="325.4" y="636" width="6" height="8.6" fill="none" stroke="#dcdcdc" stroke-width="0.6"/>
<rect x="338.8" y="633.4" width="15" height="14.2" fill="#b9d8f4"/><path d="M344 642.6L349 637.6" stroke="#dcecf9" stroke-width="0.8"/>
<rect x="353.8" y="633.6" width="57.2" height="13.8" fill="#f2f2f2" stroke="#e2e2e2" stroke-width="0.6"/>
<!-- calc icon -->
<rect x="421" y="634" width="8.6" height="12.6" fill="#e6e6e6" stroke="#555" stroke-width="0.7"/><path d="M422.6 636h5.4M422.6 638.4h5.4M422.6 640.8h5.4M422.6 643.2h5.4" stroke="#666" stroke-width="0.7"/>
<rect x="429.4" y="641.2" width="1.6" height="5.4" fill="#1f7bdc"/><rect x="432" y="641.2" width="1.6" height="5.4" fill="#1f7bdc"/>
<!-- units icon -->
<path d="M443.6 634v6M449.8 634v6M456.4 634v6M443.6 637h12.8" stroke="#2b78c8" stroke-width="0.9" fill="none"/>
<path d="M444 642.4v4M450 642.4v4M455 642.4h1.6v2h-1.6v2h1.8" stroke="#2b78c8" stroke-width="0.7" fill="none"/>
<!-- crosshair -->
<circle cx="504.6" cy="640.4" r="4.6" fill="none" stroke="#2b78c8" stroke-width="0.9"/><path d="M498 640.4h13.2M504.6 633.8v13.2" stroke="#2b78c8" stroke-width="0.8"/>
<!-- thickness icon -->
<path d="M552.4 641.4h3.4" stroke="#3a8fdc" stroke-width="0.9"/><rect x="557.4" y="634.2" width="5" height="8.4" fill="#f8f8f8" stroke="#3a8fdc" stroke-width="0.8"/><path d="M558.4 642.6v2.4h3v-2.4" fill="none" stroke="#777" stroke-width="0.7"/>
<!-- wave icon -->
<path d="M605.6 641.4h3.6q2.4 0 2.4 2.2q0.2 1.6 1.8 0.6q1.2-1 0.6-3.2q-0.6-2.6 3.6-3.2" fill="none" stroke="#3a8fdc" stroke-width="0.9"/><path d="M608 639.6l1.8 1.8l-1.8 1.8" fill="none" stroke="#3a8fdc" stroke-width="0.7"/>
<!-- diameter -->
<circle cx="665.8" cy="640.6" r="4.4" fill="none" stroke="#3a6fa8" stroke-width="0.9"/><path d="M661 646.4L670.8 634.4" stroke="#3a6fa8" stroke-width="0.9"/>
<!-- arrow -->
<path d="M724.6 634.4Q721 643 714.4 645" fill="none" stroke="#2b78c8" stroke-width="0.9"/><path d="M714.2 640.4v5h5" fill="none" stroke="#2b78c8" stroke-width="0.9"/>
</svg>
<span class="t" style="left:22.2px;top:7.8px;font-size:7.3px;color:#222">Основная_9</span>
<div class="box" style="left:208.6px;width:36.40px">5,06149</div>
<div class="box" style="left:247.6px;width:35.00px">1,73238</div>
<div class="box" style="left:284.6px;width:35.00px">30</div>
<div class="box" style="left:459.6px;width:35.00px">мм</div>
<div class="box" style="left:513.2px;width:35.60px">0,1</div>
<div class="box" style="left:567.2px;width:35.40px">0,0</div>
<div class="box" style="left:620.6px;width:35.60px">0,0</div>
<div class="box" style="left:674.2px;width:35.80px">55,0</div>
<div class="box" style="left:728.2px;width:35.60px">0,0</div>
</div>
<div id="task" class="abs">
<div class="abs" style="left:30px;top:1px;width:215.6px;height:24px;background:#f2f2f2"></div>
<div class="abs" style="left:369.4px;top:0;width:29px;height:25px;background:rgba(255,255,255,.17)"></div>
<div class="abs" style="left:310px;top:23.7px;width:25px;height:1.3px;background:#b4b0ae"></div>
<div class="abs" style="left:340.6px;top:23.7px;width:26px;height:1.3px;background:#b4b0ae"></div>
<div class="abs" style="left:369.4px;top:23.6px;width:29px;height:1.4px;background:#c2bfbd"></div>
<div class="abs" style="left:403px;top:23.7px;width:24px;height:1.3px;background:#b4b0ae"></div>
<div class="abs" style="left:431.6px;top:23.7px;width:26px;height:1.3px;background:#b4b0ae"></div>
<span class="t" style="left:55.4px;top:8.2px;font-size:9.38px;color:#3c3c3c">Чтобы начать поиск, введите здесь запрос</span>
<svg style="left:0;top:0" width="1200" height="25" viewBox="0 650 1200 25">
<g fill="#fff"><rect x="10" y="658" width="4.6" height="4.6"/><rect x="15.4" y="658" width="4.6" height="4.6"/><rect x="10" y="663.4" width="4.6" height="4.6"/><rect x="15.4" y="663.4" width="4.6" height="4.6"/></g>
<circle cx="44" cy="660.6" r="3.3" fill="none" stroke="#333" stroke-width="0.9"/><path d="M41.6 663L38 667" stroke="#333" stroke-width="1"/>
<!-- task view -->
<g fill="none" stroke="#e8e8e8" stroke-width="0.8"><rect x="256.4" y="658" width="6.2" height="8.6"/><path d="M254.8 659.6v5.4M264.4 658v2.4M264.4 662v4.6"/><path d="M263 659h2.6" /></g>
<!-- blue circle chevron -->
<circle cx="292.2" cy="662.4" r="6.8" fill="#1a73e8"/><path d="M288.8 661L292.2 664.4L295.6 661" fill="none" stroke="#fff" stroke-width="1.5"/>
<!-- W icon -->
<circle cx="322.6" cy="662.4" r="6.4" fill="#1c2a55"/><circle cx="322.6" cy="662.4" r="4.6" fill="none" stroke="#e8ecf4" stroke-width="1.2"/><path d="M319.6 660.4L321 664.8L322.6 661.4L324.2 664.8L325.6 660.4" fill="none" stroke="#fff" stroke-width="0.9"/>
<!-- doc -->
<path d="M348.6 656.6H355L358.4 660V668.4H348.6Z" fill="#fafafa"/><path d="M355 656.6V660H358.4Z" fill="#d0d0d0"/>
<!-- powermill -->
<defs><linearGradient id="og2" x1="0" y1="0" x2="0" y2="1"><stop offset="0" stop-color="#f89a30"/><stop offset="1" stop-color="#d74a0d"/></linearGradient></defs>
<rect x="378.4" y="655.8" width="12.8" height="13.4" rx="1.8" fill="url(#og2)"/>
<path d="M382.6 658h3.2a2.3 2.3 0 0 1 0 4.6h-1.6v2h-1.6z" fill="#fff"/><rect x="382.4" y="666" width="4.8" height="1.5" fill="#fff"/>
<!-- OBS -->
<circle cx="413.4" cy="662.2" r="7" fill="#2a2a2a"/><circle cx="413.4" cy="662.2" r="5.6" fill="none" stroke="#cfcfcf" stroke-width="0.8"/>
<circle cx="413.4" cy="659.6" r="1.9" fill="#d8d8d8"/><circle cx="411" cy="663.8" r="1.9" fill="#d8d8d8"/><circle cx="415.8" cy="663.8" r="1.9" fill="#d8d8d8"/>
<!-- explorer -->
<path d="M438.4 657h5l1.2 1.4h7.2V668H438.4Z" fill="#f5c542"/><rect x="438.4" y="660.4" width="13.4" height="7.6" fill="#fbdc74"/><rect x="441" y="663.4" width="8.2" height="4.6" fill="#3f95e0"/><rect x="443.2" y="665.6" width="3.8" height="2.4" fill="#fbdc74"/>
<!-- tray -->
<path d="M1031.6 664L1035 660.6L1038.4 664" fill="none" stroke="#fff" stroke-width="0.9"/>
<circle cx="1050.4" cy="662.6" r="4.6" fill="#f2d21a"/><path d="M1047 662.6a3.4 3.4 0 0 1 6.8 0z" fill="#53b52c"/><rect x="1048.6" y="661" width="4" height="3.4" fill="#2c7a1e"/>
<rect x="1063.6" y="657.4" width="3.6" height="7" rx="1.8" fill="#f4f4f4"/><path d="M1062 662.6a3.4 3.4 0 0 0 6.8 0M1065.4 666v2" fill="none" stroke="#f4f4f4" stroke-width="0.8"/>
<g fill="none" stroke="#f4f4f4" stroke-width="0.8"><rect x="1077.6" y="659.6" width="7.6" height="5.4"/><path d="M1076 667h5M1078.6 665v2M1083 658v-1.4h4.6v7"/></g>
<g fill="none" stroke="#f4f4f4" stroke-width="0.8"><path d="M1091 661.4h1.8l2.4-2.2v7l-2.4-2.2H1091Z" fill="#f4f4f4"/><path d="M1096.6 660.6a2.8 2.8 0 0 1 0 4M1098.2 659a5 5 0 0 1 0 7.2"/></g>
<path d="M1176 657.6h10v7.4h-3.6l-1.4 1.8l-1.4-1.8H1176Z" fill="none" stroke="#fff" stroke-width="0.9"/>
<rect x="1196.6" y="650" width="0.8" height="25" fill="#aaa6a3"/>
</svg>
<span class="t" style="left:1107.6px;top:8.6px;font-size:7.2px;color:#fff">РУС</span>
<span class="t" style="left:1137.4px;top:2.6px;font-size:7.2px;color:#fff">15:16</span>
<span class="t" style="left:1130.2px;top:14.8px;font-size:7.2px;color:#fff">01.04.2026</span>
</div>
</body>
</html>
